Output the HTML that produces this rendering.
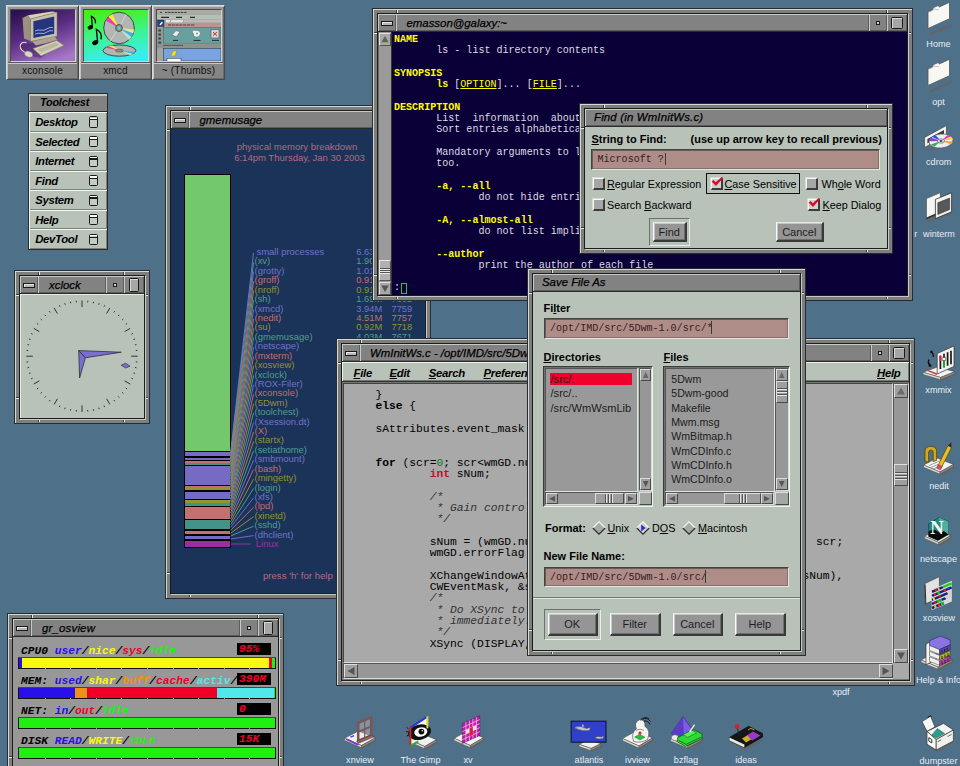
<!DOCTYPE html><html><head><meta charset="utf-8"><title>IRIX desktop</title><style>
*{box-sizing:border-box;margin:0;padding:0}
html,body{width:960px;height:766px;overflow:hidden;background:#4f7089}
body{position:relative;font-family:"Liberation Sans",sans-serif;font-size:11px;color:#000}
.a{position:absolute}
.win{position:absolute;background:#7e7e7c;border:1px solid #262c32;box-shadow:inset 1px 1px 0 #d2d8d4}
.win .in{position:absolute;left:4px;top:4px;right:4px;bottom:4px;border:1px solid #1c1c1c;background:#7a7a7a;box-shadow:1px 1px 0 #c4cac6}
.nt{position:absolute;background:#e8e8e8}
.nd{position:absolute;background:#3a3a3a}
.tb{position:absolute;left:0;top:0;right:0;height:18px;background:#838282;border-bottom:1px solid #2a2a2a}
.tb .ti{position:absolute;top:0;bottom:0;background:#838282;box-shadow:inset 1px 1px 0 #c4ccc4,inset -1px -1px 0 #5c5c5c;font:italic normal 11.4px "Liberation Sans",sans-serif;line-height:18px;white-space:nowrap;overflow:hidden;letter-spacing:0;-webkit-text-stroke:0.25px #000}
.tb .bt{position:absolute;top:0;bottom:0;background:#838282;box-shadow:inset 1px 1px 0 #c4ccc4,inset -1px -1px 0 #5c5c5c}
.cl{position:absolute;left:0;right:0;bottom:0;overflow:hidden}
.lbl{position:absolute;color:#e8eef4;font-size:9.1px;white-space:nowrap;text-align:center;transform:translateX(-50%)}
.mono{font-family:"Liberation Mono",monospace;white-space:pre}
.dlg{background:#b8c2b9}
.tf{position:absolute;background:#ae8c88;border:1px solid;border-color:#3e463e #dfe7df #dfe7df #3e463e;box-shadow:inset 1px 1px 0 #6a5a5a,inset -1px -1px 0 #8a6e6e;font-family:"Liberation Mono",monospace;white-space:pre;color:#3a2020}
.btn{position:absolute;background:#959595;border:solid;border-width:1px 2px 2px 1px;border-color:#e8e8e8 #3a3a3a #3a3a3a #fafafa;box-shadow:inset 1px 1px 0 #c6c6c6,inset -1px -1px 0 #6e6e6e;text-align:center;font-size:11px;color:#1e1e1e}
.ring{position:absolute;border:1px solid;border-color:#6a726a #e6eee6 #e6eee6 #6a726a}
.bl{position:absolute;font-weight:bold;font-size:11px;white-space:nowrap}
.nl{position:absolute;font-size:10.8px;white-space:nowrap}
.u{text-decoration:underline}
.cb{position:absolute;width:12px;height:12px;background:#a6a6a6;border:solid;border-width:1px 2px 2px 1px;border-color:#f8f8f8 #3c3c3c #3c3c3c #f8f8f8;box-shadow:-1px -1px 0 #d4dcd4}
.list{position:absolute;background:#a3a3a3;border:1px solid;border-color:#444 #eee #eee #444;box-shadow:inset 1px 1px 0 #6c6c6c}
.sb{position:absolute;background:#979797;border:1px solid;border-color:#555 #dcdcdc #dcdcdc #555}
.sbb{position:absolute;background:#9e9e9e;border:1px solid;border-color:#dedede #4a4a4a #4a4a4a #dedede}
</style></head><body>
<svg class="a" style="left:0;top:0" width="960" height="766" viewBox="0 0 960 766"><path d="M929.5 33.3 L951.5 23.8 L951.5 26.3 L929.5 35.8 Z" fill="#62666a"/><path d="M928 11.8 L932.2 9.899999999999999 L933.6 7.5 L938 5.6 L939.4 6.8999999999999995 L949.5 2.3 L949.5 18.7 L928 28.5 Z" fill="#f7f7f4" stroke="#555" stroke-width="0.8" stroke-linejoin="round"/><path d="M928.4 12.3 L932.6 10.5 L934.2 9.1 L938.6 9.7" fill="none" stroke="#9a9a9a" stroke-width="0.6"/><path d="M929.5 90.3 L951.5 80.8 L951.5 83.3 L929.5 92.8 Z" fill="#62666a"/><path d="M928 68.8 L932.2 66.89999999999999 L933.6 64.5 L938 62.599999999999994 L939.4 63.9 L949.5 59.3 L949.5 75.69999999999999 L928 85.5 Z" fill="#f7f7f4" stroke="#555" stroke-width="0.8" stroke-linejoin="round"/><path d="M928.4 69.3 L932.6 67.5 L934.2 66.1 L938.6 66.7" fill="none" stroke="#9a9a9a" stroke-width="0.6"/><path d="M926 149.5 L936 146 L936 148 L927 151 Z" fill="#62666a"/><path d="M924.6 137.4 L946.4 125.6 L946.4 135.5 L924.6 147.4 Z" fill="#f4f4f2" stroke="#444" stroke-width="0.7"/><path d="M927.4 139 L944 130 L944 134 L927.4 143.6 Z" fill="#3a3a3a"/><ellipse cx="941" cy="141" rx="12" ry="7" fill="#eceff2" stroke="#555" stroke-width="0.7" transform="rotate(-6 941 141)"/><path d="M941 141 L929.6 141.2 L930.6 137.6 Z" fill="#8a40d8"/><path d="M941 141 L930.8 144.4 L934.5 146.6 Z" fill="#30b050"/><path d="M941 141 L932 137 L935.5 135.3 Z" fill="#3050e0"/><path d="M941 141 L951.6 136.8 L952.9 139.6 Z" fill="#e8e030"/><path d="M941 141 L947.5 135 L950.8 136.5 Z" fill="#e040c0"/><path d="M941 141 L952.8 141.5 L951.5 144.2 Z" fill="#f0a030"/><ellipse cx="941" cy="141" rx="3.6" ry="2.2" fill="#d8d8dc" stroke="#555" stroke-width="0.6"/><ellipse cx="941" cy="141" rx="1.4" ry="0.9" fill="#444"/><path d="M928 220.5 L941 215.5 L952 212.5 L952 214.5 L941 218 L929 222.5 Z" fill="#62666a"/><path d="M926.4 198.6 L940.4 192.6 L940.4 213.4 L926.4 219.4 Z" fill="#f6f6f3" stroke="#4a4a4a" stroke-width="0.7"/><path d="M926.4 217.6 L940.4 211.6 L940.4 213.4 L926.4 219.4 Z" fill="#333"/><path d="M935.4 199.4 L951.6 192.8 L951.6 211.8 L935.4 218.6 Z" fill="#f2f2ee" stroke="#333" stroke-width="0.8"/><path d="M937.8 202.8 L949.6 198 L949.6 209.6 L937.8 214.6 Z" fill="#585858" stroke="#222" stroke-width="0.5"/><path d="M924.5 375.45 L942.1 380.9 L956.5 374.85 L955 372.25 Z" fill="#62666a"/><path d="M923 372.25 L937.4 367 L955 371.65 L940.6 377.5 Z" fill="#f2f2f0" stroke="#4a4a4a" stroke-width="0.6"/><path d="M923 372.25 L940.6 377.5 L940.6 379.7 L923 374.45 Z" fill="#dcdcd8" stroke="#4a4a4a" stroke-width="0.5"/><path d="M955 371.65 L940.6 377.5 L940.6 379.7 L955 373.84999999999997 Z" fill="#8c8c88" stroke="#4a4a4a" stroke-width="0.5"/><path d="M937.2 353.6 L954 346 L954 366.4 L937.2 374 Z" fill="#f2f2ee" stroke="#333" stroke-width="0.7"/><path d="M940.4 355.5 V369 M944 353.8 V367.4 M947.6 352.2 V365.8 M951 350.7 V364.2" stroke="#1a1a1a" stroke-width="1.7"/><path d="M940.4 356 V361" stroke="#e01828" stroke-width="1.7"/><path d="M944 359 V367" stroke="#18b830" stroke-width="1.7"/><path d="M942.3 357.5 h3.4 v3 h-3.4 z" fill="#fff" stroke="#222" stroke-width="0.5"/><path d="M930.5 352 q3.5 1 2.8 5 M929 359.5 q-1.6 3 0.6 5.2" stroke="#111" stroke-width="1.3" fill="none"/><circle cx="930" cy="365.5" r="1.4" fill="#111"/><circle cx="931.5" cy="351.8" r="1.2" fill="#111"/><path d="M927 369.4 L937.6 373.6 L936.4 375 L926 370.6 Z" fill="#c04848"/><path d="M925.0 468.2 L941.5 475.4 L955.0 467.6 L953.5 465.0 Z" fill="#62666a"/><path d="M923.5 465.0 L937.0 458 L953.5 464.4 L940.0 472 Z" fill="#f2f2f0" stroke="#4a4a4a" stroke-width="0.6"/><path d="M923.5 465.0 L940.0 472 L940.0 474.2 L923.5 467.2 Z" fill="#dcdcd8" stroke="#4a4a4a" stroke-width="0.5"/><path d="M953.5 464.4 L940.0 472 L940.0 474.2 L953.5 466.59999999999997 Z" fill="#8c8c88" stroke="#4a4a4a" stroke-width="0.5"/><path d="M925 461 V451.4 Q925 446.4 930.6 446.4 Q936.6 446.4 936.6 451.6 V460.4 L933.2 461.6 V452.6 Q933.2 450 930.8 450 Q928.6 450 928.6 452.6 V462.4 Z" fill="#d4a81c" stroke="#4a3a10" stroke-width="0.7"/><path d="M929 465.5 L941 460.5 M930.6 467.5 L938 464.4 M933 469 L943 464.8" stroke="#666" stroke-width="0.6"/><path d="M937.6 466.4 L948 445.6 L951.4 447.4 L941.2 468.2 Z" fill="#e8c020" stroke="#4a3a10" stroke-width="0.6"/><path d="M948 445.6 L951.2 442.2 L951.4 447.4 Z" fill="#2a2a2a"/><path d="M936.6 468.2 L938.4 464.6 L942.2 466.4 L940.4 470 Z" fill="#e04868" stroke="#802030" stroke-width="0.4"/><path d="M926.0 539.45 L940.3 545.9 L952.0 538.85 L950.5 536.25 Z" fill="#62666a"/><path d="M924.5 536.25 L936.2 530 L950.5 535.65 L938.8 542.5 Z" fill="#f2f2f0" stroke="#4a4a4a" stroke-width="0.6"/><path d="M924.5 536.25 L938.8 542.5 L938.8 544.7 L924.5 538.45 Z" fill="#dcdcd8" stroke="#4a4a4a" stroke-width="0.5"/><path d="M950.5 535.65 L938.8 542.5 L938.8 544.7 L950.5 537.85 Z" fill="#8c8c88" stroke="#4a4a4a" stroke-width="0.5"/><path d="M928.6 524 L938.6 517.6 L948.4 521.4 L948.4 534.6 L938 540.4 L928.6 536.4 Z" fill="#1f8a80" stroke="#133" stroke-width="0.6"/><path d="M938.6 517.6 L948.4 521.4 L948.4 534.6 L941 538.8 L941 524 Z" fill="#5ab8a8" opacity="0.8"/><path d="M928.6 532 Q932 527.6 936 530.6 Q940 533.6 944 531 L948.4 534.6 L938 540.4 L928.6 536.4 Z" fill="#0a0a0a"/><text x="930.2" y="534.4" font-family="Liberation Serif,serif" font-weight="bold" font-size="18.5" fill="#fff">N</text><path d="M927 606.5 L933 609.5 L933 611.5 L927 608.5 Z" fill="#62666a"/><path d="M924.4 583.8 L939.4 576.6 L939.4 597.4 L925.4 604 Z" fill="#e2e2e0" stroke="#444" stroke-width="0.7"/><path d="M924.4 583.8 L925.6 584.6 L926.4 604.4 L925.4 604 Z" fill="#333"/><path d="M931.6 589.4 L951.8 580.8 L951.8 601.6 L931.6 610.2 Z" fill="#dcdcd6"/><path d="M932.0 591.8 L942.8 587.2" stroke="#1c1c88" stroke-width="2.5"/><path d="M934.9 590.5 L936.9 589.7" stroke="#e02020" stroke-width="2.5"/><path d="M942.8 587.2 L951.6 583.4" stroke="#20d020" stroke-width="2.5"/><path d="M937.9 589.3 L939.4 588.6" stroke="#e8d020" stroke-width="2.5"/><path d="M932.0 595.8 L951.6 587.4" stroke="#1c1c88" stroke-width="2.5"/><path d="M934.0 595.0 L935.9 594.2" stroke="#e02020" stroke-width="2.5"/><path d="M937.5 593.5 L939.8 592.5" stroke="#20c020" stroke-width="2.5"/><path d="M943.8 590.8 L945.7 590.0" stroke="#e02020" stroke-width="2.5"/><path d="M947.7 589.1 L949.6 588.3" stroke="#3030e0" stroke-width="2.5"/><path d="M932.0 599.9 L947.7 593.2" stroke="#1c1c88" stroke-width="2.5"/><path d="M933.0 599.5 L934.9 598.6" stroke="#e8d020" stroke-width="2.5"/><path d="M938.9 597.0 L940.8 596.1" stroke="#e02020" stroke-width="2.5"/><path d="M947.7 593.2 L951.6 591.5" stroke="#d0d0c8" stroke-width="2.5"/><path d="M932.0 603.9 L945.7 598.1" stroke="#1c1c88" stroke-width="2.5"/><path d="M934.0 603.1 L935.9 602.3" stroke="#e02020" stroke-width="2.5"/><path d="M936.9 601.8 L941.8 599.7" stroke="#20c020" stroke-width="2.5"/><path d="M945.7 598.1 L951.6 595.5" stroke="#d0d0c8" stroke-width="2.5"/><path d="M932.0 608.0 L943.8 603.0" stroke="#1c1c88" stroke-width="2.5"/><path d="M934.4 607.0 L936.3 606.2" stroke="#e8d020" stroke-width="2.5"/><path d="M937.9 605.5 L940.2 604.5" stroke="#e02020" stroke-width="2.5"/><path d="M940.8 604.2 L943.8 603.0" stroke="#20c020" stroke-width="2.5"/><path d="M922.5 663.2 L939.55 670.4 L953.5 662.6 L952 660.0 Z" fill="#62666a"/><path d="M921 660.0 L934.95 653 L952 659.4 L938.05 667 Z" fill="#f2f2f0" stroke="#4a4a4a" stroke-width="0.6"/><path d="M921 660.0 L938.05 667 L938.05 669.2 L921 662.2 Z" fill="#dcdcd8" stroke="#4a4a4a" stroke-width="0.5"/><path d="M952 659.4 L938.05 667 L938.05 669.2 L952 661.6 Z" fill="#8c8c88" stroke="#4a4a4a" stroke-width="0.5"/><path d="M926 644 L936 639 L936 660 L926 664.6 Z" fill="#f4f4f0" stroke="#333" stroke-width="0.7"/><path d="M929.5 640.8 L940 636 L950.2 640 L950.2 644.8 L939.6 649.6 L929.5 645.6 Z" fill="#8a74e4" stroke="#2a2060" stroke-width="0.6"/><path d="M929.5 645.6 L939.6 649.6 L939.6 654.4 L929.5 650.4 Z" fill="#f0f0ec" stroke="#333" stroke-width="0.5"/><path d="M939.6 649.6 L950.2 644.8 L950.2 649.6 L939.6 654.4 Z" fill="#5a46b8" stroke="#222" stroke-width="0.5"/><path d="M929.5 651.4 L939.6 655.4 L939.6 659.8 L929.5 655.8 Z" fill="#f0f0ec" stroke="#333" stroke-width="0.5"/><path d="M939.6 655.4 L950.2 650.6 L950.2 655 L939.6 659.8 Z" fill="#b8b820" stroke="#222" stroke-width="0.5"/><path d="M929.5 656.8 L939.6 660.8 L939.6 665.4 L929.5 661.4 Z" fill="#f0f0ec" stroke="#333" stroke-width="0.5"/><path d="M939.6 660.8 L950.2 656 L950.2 660.6 L939.6 665.4 Z" fill="#c838b0" stroke="#222" stroke-width="0.5"/><path d="M942 650 v3 M944.6 648.8 v3 M947.2 647.6 v3 M942 656 v3 M945 654.6 v3 M948 653.2 v3 M942 661.4 v3 M945 660 v3 M948 658.6 v3" stroke="#222" stroke-width="1"/><path d="M928 746 L937 752 L954 742.5 L954 740 L937 749.5 Z" fill="#62666a"/><path d="M922 721.6 L930.6 716.2 L935 727 L927 731.4 Z" fill="#f7f7f4" stroke="#333" stroke-width="0.7"/><path d="M927.6 717.4 L931 715.6 L931.6 716.6" stroke="#222" stroke-width="1" fill="none"/><path d="M927 731.4 L943.6 723.4 L953.4 730 L936.2 739.6 Z" fill="#f4f4f1" stroke="#333" stroke-width="0.7"/><path d="M931.4 735.4 L937.4 728.6 L944.6 733.6 L936.4 738 Z" fill="#2f9c8c" stroke="#1a5a50" stroke-width="0.5"/><path d="M927 731.4 L936.2 739.6 L936.2 750 L927 744.2 Z" fill="#fbfbf9" stroke="#333" stroke-width="0.7"/><path d="M936.2 739.6 L953.4 730 L953.4 741 L936.2 750 Z" fill="#f0f0ec" stroke="#333" stroke-width="0.7"/><path d="M928.8 737.6 L931.8 739.6 L931.8 743 L928.8 741 Z" fill="none" stroke="#222" stroke-width="0.9"/><path d="M937.6 741.8 L941.2 739.8 M947.6 736.6 L951.6 734.4" stroke="#444" stroke-width="0.8"/><path d="M346.0 741.45 L363.05 748.9 L377.0 740.85 L375.5 738.25 Z" fill="#62666a"/><path d="M344.5 738.25 L358.45 731 L375.5 737.65 L361.55 745.5 Z" fill="#f2f2f0" stroke="#4a4a4a" stroke-width="0.6"/><path d="M344.5 738.25 L361.55 745.5 L361.55 747.7 L344.5 740.45 Z" fill="#dcdcd8" stroke="#4a4a4a" stroke-width="0.5"/><path d="M375.5 737.65 L361.55 745.5 L361.55 747.7 L375.5 739.85 Z" fill="#8c8c88" stroke="#4a4a4a" stroke-width="0.5"/><path d="M347 738.6 L359 744.2 L357.6 745.6 L345.6 739.8 Z" fill="#7838c8"/><path d="M358.2 741 V722.8 L371.2 717.4 V735.4 Z" fill="#dcdcdc" fill-opacity="0.35" stroke="#7c5656" stroke-width="2.6" stroke-linejoin="miter"/><path d="M358.2 731.8 L371.2 726.4" stroke="#7c5656" stroke-width="2"/><path d="M364.7 720 V738.2" stroke="#7c5656" stroke-width="1.2"/><path d="M356.6 741.2 L371.8 735 L374 736.8 L358.8 743.2 Z" fill="#8e6666" stroke="#4a3030" stroke-width="0.5"/><path d="M350.5 737.2 l3.6 -1.5" stroke="#3040e0" stroke-width="1.3"/><path d="M412.0 743.45 L426.3 749.9 L438.0 742.85 L436.5 740.25 Z" fill="#62666a"/><path d="M410.5 740.25 L422.2 734 L436.5 739.65 L424.8 746.5 Z" fill="#f2f2f0" stroke="#4a4a4a" stroke-width="0.6"/><path d="M410.5 740.25 L424.8 746.5 L424.8 748.7 L410.5 742.45 Z" fill="#dcdcd8" stroke="#4a4a4a" stroke-width="0.5"/><path d="M436.5 739.65 L424.8 746.5 L424.8 748.7 L436.5 741.85 Z" fill="#8c8c88" stroke="#4a4a4a" stroke-width="0.5"/><path d="M411 728 L427.4 717 L427.4 736 L411 745 Z" fill="#f4f4f2"/><ellipse cx="419.6" cy="732.2" rx="11.6" ry="7.6" fill="#101010" transform="rotate(-12 419.6 732.2)"/><ellipse cx="420.8" cy="732" rx="6.6" ry="4.6" fill="#fafafa" transform="rotate(-12 420.8 732)"/><circle cx="421.4" cy="731.6" r="2.9" fill="#0a0a0a"/><circle cx="422.3" cy="730.7" r="0.8" fill="#fff"/><path d="M410.4 727.6 L427.4 716.6" stroke="#2838d8" stroke-width="2"/><path d="M427.4 716.2 V728.4" stroke="#e0d828" stroke-width="2"/><path d="M410.4 727 V746" stroke="#d02028" stroke-width="2"/><path d="M410.6 745.6 L418.4 741.4" stroke="#28b030" stroke-width="1.8"/><path d="M408.6 729 l-2 -1.6 M408.4 732 l-2.4 -0.4 M408.8 735 l-2.2 1" stroke="#111" stroke-width="0.9"/><path d="M455.5 741.45 L471.725 748.9 L485.0 740.85 L483.5 738.25 Z" fill="#62666a"/><path d="M454 738.25 L467.275 731 L483.5 737.65 L470.225 745.5 Z" fill="#f2f2f0" stroke="#4a4a4a" stroke-width="0.6"/><path d="M454 738.25 L470.225 745.5 L470.225 747.7 L454 740.45 Z" fill="#dcdcd8" stroke="#4a4a4a" stroke-width="0.5"/><path d="M483.5 737.65 L470.225 745.5 L470.225 747.7 L483.5 739.85 Z" fill="#8c8c88" stroke="#4a4a4a" stroke-width="0.5"/><path d="M462.4 723.6 L479.8 715.6 L479.8 735.4 L462.4 743.4 Z" fill="#c418b0" stroke="#402040" stroke-width="0.5"/><path d="M465.9 722 V741.8 M469.4 720.4 V740.2 M472.9 718.8 V738.6 M476.4 717.2 V737 M462.4 727.6 L479.8 719.6 M462.4 731.6 L479.8 723.6 M462.4 735.6 L479.8 727.6 M462.4 739.6 L479.8 731.6" stroke="#e8c0e0" stroke-width="0.8"/><path d="M469.4 728.4 L472.9 726.8 L472.9 734.8 L469.4 736.4 Z" fill="#e02030"/><path d="M465.9 730 L469.4 728.4 V732.4 L465.9 734 Z M472.9 726.8 L476.4 725.2 V729.2 L472.9 730.8 Z" fill="#e8e0e0"/><path d="M580.5 747.45 L592.6 751.9 L602.5 746.85 L601 744.25 Z" fill="#62666a"/><path d="M579 744.25 L588.9 740 L601 743.65 L591.1 748.5 Z" fill="#f2f2f0" stroke="#4a4a4a" stroke-width="0.6"/><path d="M579 744.25 L591.1 748.5 L591.1 750.7 L579 746.45 Z" fill="#dcdcd8" stroke="#4a4a4a" stroke-width="0.5"/><path d="M601 743.65 L591.1 748.5 L591.1 750.7 L601 745.85 Z" fill="#8c8c88" stroke="#4a4a4a" stroke-width="0.5"/><rect x="571.2" y="721.2" width="34.8" height="21" fill="#3040c8" stroke="#101830" stroke-width="1.1"/><path d="M574 727.4 Q580 725 586.6 728.6 L590.6 727.2 L589.4 730.6 Q581 731.6 574 727.4 Z" fill="#c4c8d0" stroke="#333" stroke-width="0.4"/><path d="M581.4 726.4 l1.6 -2.4 l1 2.6" fill="#c4c8d0"/><path d="M594.6 737.4 Q598 735.6 601.4 737 L603.8 735.4 L603.2 738.6 Q598.4 740 594.6 737.4 Z" fill="#c4c8d0" stroke="#333" stroke-width="0.4"/><path d="M624.0 741.7 L640.5 749.4 L654.0 741.1 L652.5 738.5 Z" fill="#62666a"/><path d="M622.5 738.5 L636.0 731 L652.5 737.9 L639.0 746 Z" fill="#f2f2f0" stroke="#4a4a4a" stroke-width="0.6"/><path d="M622.5 738.5 L639.0 746 L639.0 748.2 L622.5 740.7 Z" fill="#dcdcd8" stroke="#4a4a4a" stroke-width="0.5"/><path d="M652.5 737.9 L639.0 746 L639.0 748.2 L652.5 740.1 Z" fill="#8c8c88" stroke="#4a4a4a" stroke-width="0.5"/><path d="M633.6 741.4 Q630.6 732.6 636.4 729 Q633.6 722.4 639.4 719.8 Q645.6 719.4 645 726.4 Q651 730 647.6 739.4 Q641 743.6 633.6 741.4 Z" fill="#f4f4f1" stroke="#444" stroke-width="0.6"/><path d="M640.6 720 Q644 716 649 718.6 M642.6 719.4 Q647 716.6 650.4 721.4 M644 721 Q648.6 720.6 650 724.6" stroke="#1a1a1a" stroke-width="1" fill="none"/><path d="M634.6 737 L639.6 734.2 L645 737.2 L640 740 Z" fill="#28c040" stroke="#145020" stroke-width="0.4"/><circle cx="640" cy="733" r="1.6" fill="#e02030"/><path d="M636 730.4 q4 -2.6 8 0" stroke="#555" stroke-width="0.6" fill="none"/><path d="M672.0 741.95 L689.325 749.4 L703.5 741.35 L702 738.75 Z" fill="#62666a"/><path d="M670.5 738.75 L684.675 731.5 L702 738.15 L687.825 746 Z" fill="#f2f2f0" stroke="#4a4a4a" stroke-width="0.6"/><path d="M670.5 738.75 L687.825 746 L687.825 748.2 L670.5 740.95 Z" fill="#dcdcd8" stroke="#4a4a4a" stroke-width="0.5"/><path d="M702 738.15 L687.825 746 L687.825 748.2 L702 740.35 Z" fill="#8c8c88" stroke="#4a4a4a" stroke-width="0.5"/><path d="M683 716.6 L671.4 733.4 L684 739 L693.6 731.4 Z" fill="#7c5ce4" stroke="#2a2060" stroke-width="0.6"/><path d="M683 716.6 L684 739 L671.4 733.4 Z" fill="#5a3cc8"/><path d="M671.6 736.4 q2.4 -3 6.4 -0.6 l0.6 4.6 q-4 1 -7 -1.4 z" fill="#ececea" stroke="#555" stroke-width="0.4"/><path d="M677.6 737.6 L694 729.6 L702 734 L702 738.6 L685.6 746.4 L677.6 742 Z" fill="#30d838" stroke="#0c4a14" stroke-width="0.7"/><path d="M683 734.4 L692 730.2 L696.6 732.8 L687.6 737.4 Z" fill="#58f060" stroke="#0c4a14" stroke-width="0.5"/><path d="M679 740.6 L686 744.4 L701 737.2" stroke="#0c4a14" stroke-width="0.7" fill="none"/><path d="M689.6 732 L694.6 724.6" stroke="#e8e8e8" stroke-width="1.4"/><path d="M731 742 L745 750.5 L763 741 L763 738.6 L745 748 Z" fill="#62666a"/><path d="M729.4 737.4 L748.6 726.2 L762.6 733.4 L762.6 737 L744.4 747.6 L729.4 740.6 Z" fill="#161616" stroke="#000" stroke-width="0.5"/><path d="M729.4 737.4 L744.4 744.4 L744.4 747.6 L729.4 740.6 Z" fill="#e8e8e4"/><path d="M745 736.6 L753 731.6 L760.4 735.4 L752.4 740.6 Z" fill="#9a38c8"/><path d="M742 738.6 L747.4 735.4 L751 739.6 L746 742.6 Z" fill="#c8b028"/><path d="M748 730 l3 -1.6 l3.4 1.6" stroke="#c8b028" stroke-width="0.9" fill="none"/><circle cx="737" cy="726.4" r="2.5" fill="#d42030"/><path d="M737.4 728.6 L739.6 736" stroke="#222" stroke-width="0.9"/></svg><div class="lbl" style="left:938.5px;top:38px;line-height:12px">Home</div><div class="lbl" style="left:938.5px;top:95.5px;line-height:12px">opt</div><div class="lbl" style="left:938.7px;top:155.5px;line-height:12px">cdrom</div><div class="lbl" style="left:939px;top:228.3px;line-height:12px">winterm</div><div class="lbl" style="left:915.7px;top:228.3px;line-height:12px">r</div><div class="lbl" style="left:938.5px;top:384.3px;line-height:12px">xmmix</div><div class="lbl" style="left:939px;top:480px;line-height:12px">nedit</div><div class="lbl" style="left:938.5px;top:553px;line-height:12px">netscape</div><div class="lbl" style="left:939px;top:612px;line-height:12px">xosview</div><div class="lbl" style="left:938.5px;top:674px;line-height:12px">Help &amp; Info</div><div class="lbl" style="left:938.5px;top:754.6px;line-height:12px">dumpster</div><div class="lbl" style="left:360px;top:754px;line-height:12px">xnview</div><div class="lbl" style="left:420.5px;top:754px;line-height:12px">The Gimp</div><div class="lbl" style="left:468px;top:754px;line-height:12px">xv</div><div class="lbl" style="left:589px;top:754px;line-height:12px">atlantis</div><div class="lbl" style="left:637.5px;top:754px;line-height:12px">ivview</div><div class="lbl" style="left:686px;top:754px;line-height:12px">bzflag</div><div class="lbl" style="left:746px;top:754px;line-height:12px">ideas</div><div class="lbl" style="left:841px;top:686px;line-height:12px">xpdf</div>
<div class="a" style="left:6px;top:5px;width:73px;height:75px;background:#969696;border:1px solid;border-color:#dcdcdc #464646 #464646 #dcdcdc;box-shadow:inset 1px 1px 0 #c4c4c4,inset -1px -1px 0 #6a6a6a"></div><div class="a" style="left:10px;top:9px;width:66px;height:53px;overflow:hidden;border:1px solid;border-color:#4a4a4a #d0d0d0 #d0d0d0 #4a4a4a"><svg width="64" height="51" viewBox="0 0 64 51"><defs><linearGradient id="pg" x1="0.2" y1="0" x2="0.7" y2="1"><stop offset="0" stop-color="#2c1250"/><stop offset="0.45" stop-color="#5a2c84"/><stop offset="1" stop-color="#a478c4"/></linearGradient></defs>
<rect width="64" height="51" fill="url(#pg)"/>
<path d="M8 36 Q20 30 44 37 L30 48 Q14 46 8 36 Z" fill="#3a1a5c" opacity="0.45"/>
<path d="M11.5 8 L17 5.2 L19.4 9 L19.4 31 L13 28.6 Z" fill="#9a927c"/>
<path d="M17 5.2 L41 1.6 L46 2.2 L19.4 9 Z" fill="#d8d2bc"/>
<path d="M19.4 9 L46 2.2 L46 26.2 L19.4 31.4 Z" fill="#c6c0a8" stroke="#7a745e" stroke-width="0.5"/>
<path d="M22.4 11.2 L43.2 6.4 L43.2 23.8 L22.4 28 Z" fill="#24357e"/>
<path d="M24 21 q3 -1.6 6 -0.8 t6 -1.4 t6 -1.2 M24 24.2 q3 -1.6 6 -0.8 t6 -1.4 t6 -1.2" stroke="#a8b8f0" stroke-width="0.9" fill="none"/>
<path d="M21 31.4 L44 26.6 L46 30 L25 35.4 Z" fill="#aaa48c"/>
<path d="M22 38.4 L45.6 30.4 L53 35.4 L30 46 Z" fill="#d4ceb6" stroke="#7a745e" stroke-width="0.5"/>
<path d="M26 39.2 L45 32.6 L48.6 35 L30 42.4 Z" fill="#bcb69e"/>
<path d="M14 42.4 Q7.6 38.6 9.6 34.2 Q11.4 31.4 15.4 32.6" stroke="#e0dcc8" stroke-width="1.1" fill="none"/>
<ellipse cx="17.6" cy="44.2" rx="4.2" ry="2.8" fill="#dcd8c4" stroke="#7a745e" stroke-width="0.4" transform="rotate(20 17.6 44.2)"/>
</svg></div><div class="a" style="left:8px;top:64px;width:69px;height:14px;background:#858585;box-shadow:0 -1px 0 #c8c8c8,0 -2px 0 #5a5a5a;text-align:center;font-size:10px;line-height:14.5px;color:#111;letter-spacing:0.2px">xconsole</div>
<div class="a" style="left:79px;top:5px;width:73px;height:75px;background:#969696;border:1px solid;border-color:#dcdcdc #464646 #464646 #dcdcdc;box-shadow:inset 1px 1px 0 #c4c4c4,inset -1px -1px 0 #6a6a6a"></div><div class="a" style="left:83px;top:9px;width:66px;height:53px;overflow:hidden;border:1px solid;border-color:#4a4a4a #d0d0d0 #d0d0d0 #4a4a4a"><svg width="64" height="51" viewBox="0 0 64 51"><defs><linearGradient id="cg" x1="0.3" y1="0" x2="0.5" y2="1"><stop offset="0" stop-color="#44f014"/><stop offset="0.5" stop-color="#3cf490"/><stop offset="1" stop-color="#38ecf4"/></linearGradient></defs>
<rect width="64" height="51" fill="url(#cg)"/>
<ellipse cx="35" cy="18" rx="15.3" ry="15.8" fill="#b2b6b2" stroke="#3a3a3a" stroke-width="0.9"/>
<path d="M35 18 L21.6 10.6 L24.6 6.4 Z" fill="#f038b0"/><path d="M35 18 L24.4 6.6 L28.4 4 Z" fill="#f4ec38"/>
<path d="M35 18 L47.6 27 L49.4 23.2 Z" fill="#48a8f4"/><path d="M35 18 L45.2 30 L47.6 27 Z" fill="#b0e8c0"/><path d="M35 18 L49.4 23.2 L50 19.6 Z" fill="#e8e890"/>
<path d="M35 18 L42 4.4 M35 18 L26 31" stroke="#dcdcdc" stroke-width="0.8"/>
<ellipse cx="35" cy="18" rx="3.4" ry="3.6" fill="#8c8c8c" stroke="#3a3a3a" stroke-width="0.7"/><ellipse cx="35" cy="18" rx="1.5" ry="1.6" fill="#40e8b0"/>
<ellipse cx="35.4" cy="40.6" rx="16.4" ry="5.6" fill="#b2b6b2" stroke="#3a3a3a" stroke-width="0.9"/>
<path d="M35.4 40.6 L21 37.6 L24.4 36 Z" fill="#f038b0"/><path d="M35.4 40.6 L24.4 36 L28.4 35.4 Z" fill="#f4ec38"/><path d="M35.4 40.6 L49 44 L51 42 Z" fill="#48a8f4"/><path d="M35.4 40.6 L46 45.2 L49 44 Z" fill="#b0e8c0"/>
<ellipse cx="35.4" cy="40.6" rx="4" ry="1.5" fill="#8c8c8c" stroke="#3a3a3a" stroke-width="0.5"/>
<g fill="#0a0a0a" stroke="#0a0a0a"><ellipse cx="6.4" cy="17.4" rx="2.3" ry="1.6" transform="rotate(-25 6.4 17.4)"/><path d="M8.4 16.8 L7.4 6.4 Q12 8.4 11.4 13.4" fill="none" stroke-width="1.3"/>
<ellipse cx="11.2" cy="32.6" rx="2.6" ry="1.8" transform="rotate(-25 11.2 32.6)"/><path d="M13.6 32 L12.4 19.4 Q18.6 22.4 17 29.4" fill="none" stroke-width="1.4"/></g>
</svg></div><div class="a" style="left:81px;top:64px;width:69px;height:14px;background:#858585;box-shadow:0 -1px 0 #c8c8c8,0 -2px 0 #5a5a5a;text-align:center;font-size:10px;line-height:14.5px;color:#111;letter-spacing:0.2px">xmcd</div>
<div class="a" style="left:152px;top:5px;width:73px;height:75px;background:#969696;border:1px solid;border-color:#dcdcdc #464646 #464646 #dcdcdc;box-shadow:inset 1px 1px 0 #c4c4c4,inset -1px -1px 0 #6a6a6a"></div><div class="a" style="left:156px;top:9px;width:66px;height:53px;overflow:hidden;border:1px solid;border-color:#4a4a4a #d0d0d0 #d0d0d0 #4a4a4a"><svg width="64" height="51" viewBox="0 0 64 51"><rect width="64" height="51" fill="#a2a6a0"/>
<rect x="0" y="0" width="64" height="4.4" fill="#a8aca4"/><path d="M3 2.4 h2 M8 2.4 H30" stroke="#3a3a3a" stroke-width="1" stroke-dasharray="2.4 0.8"/>
<rect x="0" y="5" width="64" height="4.4" fill="#b6beb6"/><path d="M4 7.4 H12 M19 7.4 H25 M33 7.4 H38" stroke="#2a2a2a" stroke-width="1.1"/>
<rect x="0.6" y="10" width="6.4" height="6.6" fill="#2a3c8c" stroke="#222" stroke-width="0.4"/><path d="M2.4 14.6 l2.6 -3 l0.8 1.2 l-2.2 2.6 z" fill="#fff"/>
<rect x="9" y="10" width="4" height="2.4" fill="#e8e8e8"/><rect x="14" y="10" width="12" height="2.4" fill="#e0e0e0"/><rect x="27" y="10" width="37" height="2.4" fill="#b8bcb6"/>
<rect x="9" y="13" width="55" height="3.6" fill="#c88e8e"/><path d="M11 15 H38" stroke="#4a3030" stroke-width="0.9" stroke-dasharray="3 0.8"/>
<rect x="0" y="17.6" width="6" height="16" fill="#909890"/><path d="M2.6 19.4 v2.2 M2.6 23.4 v2.2 M2.6 27.4 v2.2" stroke="#2a3a58" stroke-width="2.4"/><rect x="1.2" y="31.6" width="3" height="2.4" fill="#2a3c8c"/>
<rect x="6.4" y="17.6" width="57.6" height="15.6" fill="#68a0a0" stroke="#3a5a5a" stroke-width="0.5"/>
<path d="M15 25 L19 20.6 L23 21.8 L19.4 26.8 Z" fill="#ececec" stroke="#555" stroke-width="0.5"/>
<path d="M35 22 Q36 19.4 39 20.4 Q43 20 43.4 23.4 Q43 27 39.6 27 Q36 26.6 36.6 24 Z" fill="#f4f4f4" stroke="#555" stroke-width="0.5"/><circle cx="40" cy="23.6" r="1" fill="#4aa"/>
<rect x="54" y="19.6" width="8" height="8.4" fill="#dcd4d4" stroke="#456" stroke-width="0.6"/><path d="M56 22 l4 3.6 m0 -3.6 l-4 3.6" stroke="#c82828" stroke-width="1"/>
<path d="M16 30.4 h5 M36.6 30.4 h7 M55 30.4 h7" stroke="#1a3038" stroke-width="1"/>
<rect x="0" y="33.6" width="64" height="4.6" fill="#8e928c"/><path d="M6 35.4 h20" stroke="#444" stroke-width="0.8"/>
<rect x="6.4" y="38.6" width="57.6" height="12.4" fill="#7aa4e0" stroke="#2a3a58" stroke-width="0.6"/>
<path d="M14 46.4 L15.6 41.4 L19.6 40.4 L18.4 45.6 Z" fill="#f0e428" stroke="#8a8010" stroke-width="0.4"/>
<rect x="10" y="48.4" width="14" height="3" fill="#fff" stroke="#000" stroke-width="0.4"/>
</svg></div><div class="a" style="left:154px;top:64px;width:69px;height:14px;background:#858585;box-shadow:0 -1px 0 #c8c8c8,0 -2px 0 #5a5a5a;text-align:center;font-size:10px;line-height:14.5px;color:#111;letter-spacing:0.2px">~ (Thumbs)</div>
<div class="a" style="left:28px;top:93px;width:80px;height:156.8px;background:#b8c2b9;border:1px solid #2a2a2a"></div><div class="a" style="left:29px;top:94px;width:78px;height:17px;background:#828282;box-shadow:inset 1px 2px 0 #c4c8c2,0 1px 0 #2a2a2a;font:italic bold 10.9px 'Liberation Sans',sans-serif;letter-spacing:-0.2px;line-height:17.4px;padding-left:10.9px">Toolchest</div><div class="a" style="left:29px;top:112.0px;width:78px;height:19.54px;background:#b8c2b9;box-shadow:inset 1px 1px 0 #f2f6f2,inset -1px -1px 0 #7a827a;font:italic bold 11.3px 'Liberation Sans',sans-serif;letter-spacing:-0.3px;line-height:21.1px;padding-left:6.2px">Desktop</div><div class="a" style="left:88.6px;top:116.4px;width:9px;height:11.4px;border:1.3px solid #1a1a1a;border-radius:1.6px;background:#c4ccc4"></div><div class="a" style="left:89.6px;top:117.6px;width:7px;height:1.6px;background:#fff"></div><div class="a" style="left:89.19999999999999px;top:119.2px;width:8px;height:1.3px;background:#1a1a1a"></div><div class="a" style="left:29px;top:131.5px;width:78px;height:19.54px;background:#b8c2b9;box-shadow:inset 1px 1px 0 #f2f6f2,inset -1px -1px 0 #7a827a;font:italic bold 11.3px 'Liberation Sans',sans-serif;letter-spacing:-0.3px;line-height:21.1px;padding-left:6.2px">Selected</div><div class="a" style="left:88.6px;top:135.9px;width:9px;height:11.4px;border:1.3px solid #1a1a1a;border-radius:1.6px;background:#c4ccc4"></div><div class="a" style="left:89.6px;top:137.1px;width:7px;height:1.6px;background:#fff"></div><div class="a" style="left:89.19999999999999px;top:138.7px;width:8px;height:1.3px;background:#1a1a1a"></div><div class="a" style="left:29px;top:151.1px;width:78px;height:19.54px;background:#b8c2b9;box-shadow:inset 1px 1px 0 #f2f6f2,inset -1px -1px 0 #7a827a;font:italic bold 11.3px 'Liberation Sans',sans-serif;letter-spacing:-0.3px;line-height:21.1px;padding-left:6.2px">Internet</div><div class="a" style="left:88.6px;top:155.5px;width:9px;height:11.4px;border:1.3px solid #1a1a1a;border-radius:1.6px;background:#c4ccc4"></div><div class="a" style="left:89.6px;top:156.7px;width:7px;height:1.6px;background:#fff"></div><div class="a" style="left:89.19999999999999px;top:158.3px;width:8px;height:1.3px;background:#1a1a1a"></div><div class="a" style="left:29px;top:170.6px;width:78px;height:19.54px;background:#b8c2b9;box-shadow:inset 1px 1px 0 #f2f6f2,inset -1px -1px 0 #7a827a;font:italic bold 11.3px 'Liberation Sans',sans-serif;letter-spacing:-0.3px;line-height:21.1px;padding-left:6.2px">Find</div><div class="a" style="left:88.6px;top:175.0px;width:9px;height:11.4px;border:1.3px solid #1a1a1a;border-radius:1.6px;background:#c4ccc4"></div><div class="a" style="left:89.6px;top:176.2px;width:7px;height:1.6px;background:#fff"></div><div class="a" style="left:89.19999999999999px;top:177.8px;width:8px;height:1.3px;background:#1a1a1a"></div><div class="a" style="left:29px;top:190.2px;width:78px;height:19.54px;background:#b8c2b9;box-shadow:inset 1px 1px 0 #f2f6f2,inset -1px -1px 0 #7a827a;font:italic bold 11.3px 'Liberation Sans',sans-serif;letter-spacing:-0.3px;line-height:21.1px;padding-left:6.2px">System</div><div class="a" style="left:88.6px;top:194.6px;width:9px;height:11.4px;border:1.3px solid #1a1a1a;border-radius:1.6px;background:#c4ccc4"></div><div class="a" style="left:89.6px;top:195.8px;width:7px;height:1.6px;background:#fff"></div><div class="a" style="left:89.19999999999999px;top:197.4px;width:8px;height:1.3px;background:#1a1a1a"></div><div class="a" style="left:29px;top:209.7px;width:78px;height:19.54px;background:#b8c2b9;box-shadow:inset 1px 1px 0 #f2f6f2,inset -1px -1px 0 #7a827a;font:italic bold 11.3px 'Liberation Sans',sans-serif;letter-spacing:-0.3px;line-height:21.1px;padding-left:6.2px">Help</div><div class="a" style="left:88.6px;top:214.1px;width:9px;height:11.4px;border:1.3px solid #1a1a1a;border-radius:1.6px;background:#c4ccc4"></div><div class="a" style="left:89.6px;top:215.3px;width:7px;height:1.6px;background:#fff"></div><div class="a" style="left:89.19999999999999px;top:216.9px;width:8px;height:1.3px;background:#1a1a1a"></div><div class="a" style="left:29px;top:229.3px;width:78px;height:19.54px;background:#b8c2b9;box-shadow:inset 1px 1px 0 #f2f6f2,inset -1px -1px 0 #7a827a;font:italic bold 11.3px 'Liberation Sans',sans-serif;letter-spacing:-0.3px;line-height:21.1px;padding-left:6.2px">DevTool</div><div class="a" style="left:88.6px;top:233.7px;width:9px;height:11.4px;border:1.3px solid #1a1a1a;border-radius:1.6px;background:#c4ccc4"></div><div class="a" style="left:89.6px;top:234.9px;width:7px;height:1.6px;background:#fff"></div><div class="a" style="left:89.19999999999999px;top:236.5px;width:8px;height:1.3px;background:#1a1a1a"></div>
<div class="win" style="left:14px;top:270px;width:136px;height:154px"><div class="nt" style="left:24px;top:1px;width:1px;height:4px"></div><div class="nd" style="left:23px;top:1px;width:1px;height:4px"></div><div class="nt" style="left:109px;top:1px;width:1px;height:4px"></div><div class="nd" style="left:108px;top:1px;width:1px;height:4px"></div><div class="nt" style="left:24px;top:147px;width:1px;height:4px"></div><div class="nd" style="left:23px;top:147px;width:1px;height:4px"></div><div class="nt" style="left:109px;top:147px;width:1px;height:4px"></div><div class="nd" style="left:108px;top:147px;width:1px;height:4px"></div><div class="nt" style="left:1px;top:24px;width:4px;height:1px"></div><div class="nd" style="left:1px;top:23px;width:4px;height:1px"></div><div class="nt" style="left:1px;top:127px;width:4px;height:1px"></div><div class="nd" style="left:1px;top:126px;width:4px;height:1px"></div><div class="nt" style="left:129px;top:24px;width:4px;height:1px"></div><div class="nd" style="left:129px;top:23px;width:4px;height:1px"></div><div class="nt" style="left:129px;top:127px;width:4px;height:1px"></div><div class="nd" style="left:129px;top:126px;width:4px;height:1px"></div><div class="in"><div class="tb"><div class="bt" style="left:0;width:18px"><div class="a" style="left:3px;top:7px;width:12.4px;height:5.2px;border:1px solid #1a1a1a;border-bottom-width:1.4px;background:#b8b8b8;box-shadow:inset 1px 1px 0 #e8e8e8"></div></div><div class="bt" style="right:0;width:20px"><div class="a" style="left:5px;top:2px;width:10px;height:14px;border:1px solid #1a1a1a;border-bottom-width:1.4px;border-right-width:1.4px;border-radius:1.5px;background:#a6a6a6;box-shadow:inset 1px 1px 0 #d8d8d8"></div></div><div class="bt" style="right:20px;width:18px"><div class="a" style="left:7px;top:7px;width:4.4px;height:4.4px;border:1px solid #1a1a1a;background:#d0d0d0"></div></div><div class="ti" style="left:18px;right:38px;padding-left:11px">xclock</div></div><div class="cl " style="top:18px"><div class="a" style="left:0;top:0;width:100%;height:100%;background:#b8c2b9;box-shadow:inset 1px 1px 0 #e4ece4"></div><svg class="a" style="left:0;top:0" width="125" height="124" viewBox="0 0 125 124"><line x1="62.00" y1="13.00" x2="62.00" y2="6.50" stroke="#2c362c" stroke-width="1"/><line x1="67.65" y1="8.40" x2="67.82" y2="6.81" stroke="#2c362c" stroke-width="1"/><line x1="73.25" y1="9.28" x2="73.58" y2="7.72" stroke="#2c362c" stroke-width="1"/><line x1="78.72" y1="10.75" x2="79.21" y2="9.23" stroke="#2c362c" stroke-width="1"/><line x1="84.00" y1="12.78" x2="84.66" y2="11.32" stroke="#2c362c" stroke-width="1"/><line x1="86.60" y1="19.59" x2="89.85" y2="13.96" stroke="#2c362c" stroke-width="1"/><line x1="93.80" y1="18.43" x2="94.74" y2="17.14" stroke="#2c362c" stroke-width="1"/><line x1="98.20" y1="22.00" x2="99.27" y2="20.81" stroke="#2c362c" stroke-width="1"/><line x1="102.20" y1="26.00" x2="103.39" y2="24.93" stroke="#2c362c" stroke-width="1"/><line x1="105.77" y1="30.40" x2="107.06" y2="29.46" stroke="#2c362c" stroke-width="1"/><line x1="104.61" y1="37.60" x2="110.24" y2="34.35" stroke="#2c362c" stroke-width="1"/><line x1="111.42" y1="40.20" x2="112.88" y2="39.54" stroke="#2c362c" stroke-width="1"/><line x1="113.45" y1="45.48" x2="114.97" y2="44.99" stroke="#2c362c" stroke-width="1"/><line x1="114.92" y1="50.95" x2="116.48" y2="50.62" stroke="#2c362c" stroke-width="1"/><line x1="115.80" y1="56.55" x2="117.39" y2="56.38" stroke="#2c362c" stroke-width="1"/><line x1="111.20" y1="62.20" x2="117.70" y2="62.20" stroke="#2c362c" stroke-width="1"/><line x1="115.80" y1="67.85" x2="117.39" y2="68.02" stroke="#2c362c" stroke-width="1"/><line x1="114.92" y1="73.45" x2="116.48" y2="73.78" stroke="#2c362c" stroke-width="1"/><line x1="113.45" y1="78.92" x2="114.97" y2="79.41" stroke="#2c362c" stroke-width="1"/><line x1="111.42" y1="84.20" x2="112.88" y2="84.86" stroke="#2c362c" stroke-width="1"/><line x1="104.61" y1="86.80" x2="110.24" y2="90.05" stroke="#2c362c" stroke-width="1"/><line x1="105.77" y1="94.00" x2="107.06" y2="94.94" stroke="#2c362c" stroke-width="1"/><line x1="102.20" y1="98.40" x2="103.39" y2="99.47" stroke="#2c362c" stroke-width="1"/><line x1="98.20" y1="102.40" x2="99.27" y2="103.59" stroke="#2c362c" stroke-width="1"/><line x1="93.80" y1="105.97" x2="94.74" y2="107.26" stroke="#2c362c" stroke-width="1"/><line x1="86.60" y1="104.81" x2="89.85" y2="110.44" stroke="#2c362c" stroke-width="1"/><line x1="84.00" y1="111.62" x2="84.66" y2="113.08" stroke="#2c362c" stroke-width="1"/><line x1="78.72" y1="113.65" x2="79.21" y2="115.17" stroke="#2c362c" stroke-width="1"/><line x1="73.25" y1="115.12" x2="73.58" y2="116.68" stroke="#2c362c" stroke-width="1"/><line x1="67.65" y1="116.00" x2="67.82" y2="117.59" stroke="#2c362c" stroke-width="1"/><line x1="62.00" y1="111.40" x2="62.00" y2="117.90" stroke="#2c362c" stroke-width="1"/><line x1="56.35" y1="116.00" x2="56.18" y2="117.59" stroke="#2c362c" stroke-width="1"/><line x1="50.75" y1="115.12" x2="50.42" y2="116.68" stroke="#2c362c" stroke-width="1"/><line x1="45.28" y1="113.65" x2="44.79" y2="115.17" stroke="#2c362c" stroke-width="1"/><line x1="40.00" y1="111.62" x2="39.34" y2="113.08" stroke="#2c362c" stroke-width="1"/><line x1="37.40" y1="104.81" x2="34.15" y2="110.44" stroke="#2c362c" stroke-width="1"/><line x1="30.20" y1="105.97" x2="29.26" y2="107.26" stroke="#2c362c" stroke-width="1"/><line x1="25.80" y1="102.40" x2="24.73" y2="103.59" stroke="#2c362c" stroke-width="1"/><line x1="21.80" y1="98.40" x2="20.61" y2="99.47" stroke="#2c362c" stroke-width="1"/><line x1="18.23" y1="94.00" x2="16.94" y2="94.94" stroke="#2c362c" stroke-width="1"/><line x1="19.39" y1="86.80" x2="13.76" y2="90.05" stroke="#2c362c" stroke-width="1"/><line x1="12.58" y1="84.20" x2="11.12" y2="84.86" stroke="#2c362c" stroke-width="1"/><line x1="10.55" y1="78.92" x2="9.03" y2="79.41" stroke="#2c362c" stroke-width="1"/><line x1="9.08" y1="73.45" x2="7.52" y2="73.78" stroke="#2c362c" stroke-width="1"/><line x1="8.20" y1="67.85" x2="6.61" y2="68.02" stroke="#2c362c" stroke-width="1"/><line x1="12.80" y1="62.20" x2="6.30" y2="62.20" stroke="#2c362c" stroke-width="1"/><line x1="8.20" y1="56.55" x2="6.61" y2="56.38" stroke="#2c362c" stroke-width="1"/><line x1="9.08" y1="50.95" x2="7.52" y2="50.62" stroke="#2c362c" stroke-width="1"/><line x1="10.55" y1="45.48" x2="9.03" y2="44.99" stroke="#2c362c" stroke-width="1"/><line x1="12.58" y1="40.20" x2="11.12" y2="39.54" stroke="#2c362c" stroke-width="1"/><line x1="19.39" y1="37.60" x2="13.76" y2="34.35" stroke="#2c362c" stroke-width="1"/><line x1="18.23" y1="30.40" x2="16.94" y2="29.46" stroke="#2c362c" stroke-width="1"/><line x1="21.80" y1="26.00" x2="20.61" y2="24.93" stroke="#2c362c" stroke-width="1"/><line x1="25.80" y1="22.00" x2="24.73" y2="20.81" stroke="#2c362c" stroke-width="1"/><line x1="30.20" y1="18.43" x2="29.26" y2="17.14" stroke="#2c362c" stroke-width="1"/><line x1="37.40" y1="19.59" x2="34.15" y2="13.96" stroke="#2c362c" stroke-width="1"/><line x1="40.00" y1="12.78" x2="39.34" y2="11.32" stroke="#2c362c" stroke-width="1"/><line x1="45.28" y1="10.75" x2="44.79" y2="9.23" stroke="#2c362c" stroke-width="1"/><line x1="50.75" y1="9.28" x2="50.42" y2="7.72" stroke="#2c362c" stroke-width="1"/><line x1="56.35" y1="8.40" x2="56.18" y2="6.81" stroke="#2c362c" stroke-width="1"/><path d="M58.7 56.6 L101.3 58.2 L65.4 63.8 Z" fill="#7a6fd0" stroke="#222" stroke-width="0.7"/><path d="M58.7 56.6 L65.4 63.8 L59.6 84 Z" fill="#7a6fd0" stroke="#222" stroke-width="0.7"/><path d="M101.2 71.2 L105.6 69.2 L110 72.2 L105.6 74 Z" fill="#7a6fd0" stroke="#222" stroke-width="0.6"/></svg></div></div></div>
<div class="win" style="left:165px;top:105px;width:266px;height:494px"><div class="nt" style="left:24px;top:1px;width:1px;height:4px"></div><div class="nd" style="left:23px;top:1px;width:1px;height:4px"></div><div class="nt" style="left:239px;top:1px;width:1px;height:4px"></div><div class="nd" style="left:238px;top:1px;width:1px;height:4px"></div><div class="nt" style="left:24px;top:487px;width:1px;height:4px"></div><div class="nd" style="left:23px;top:487px;width:1px;height:4px"></div><div class="nt" style="left:239px;top:487px;width:1px;height:4px"></div><div class="nd" style="left:238px;top:487px;width:1px;height:4px"></div><div class="nt" style="left:1px;top:24px;width:4px;height:1px"></div><div class="nd" style="left:1px;top:23px;width:4px;height:1px"></div><div class="nt" style="left:1px;top:467px;width:4px;height:1px"></div><div class="nd" style="left:1px;top:466px;width:4px;height:1px"></div><div class="nt" style="left:259px;top:24px;width:4px;height:1px"></div><div class="nd" style="left:259px;top:23px;width:4px;height:1px"></div><div class="nt" style="left:259px;top:467px;width:4px;height:1px"></div><div class="nd" style="left:259px;top:466px;width:4px;height:1px"></div><div class="in"><div class="tb"><div class="bt" style="left:0;width:18px"><div class="a" style="left:3px;top:7px;width:12.4px;height:5.2px;border:1px solid #1a1a1a;border-bottom-width:1.4px;background:#b8b8b8;box-shadow:inset 1px 1px 0 #e8e8e8"></div></div><div class="ti" style="left:18px;right:0px;padding-left:10.5px">gmemusage</div></div><div class="cl " style="top:18px"><div class="a" style="left:0;top:0;width:100%;height:100%;background:#1b3259"></div><div class="a" style="left:126px;top:11.699999999999989px;transform:translateX(-50%);font-size:9.5px;line-height:12px;color:#b56b7c;white-space:nowrap">physical memory breakdown</div><div class="a" style="left:128.5px;top:22.80000000000001px;transform:translateX(-50%);font-size:9.5px;line-height:12px;color:#b56b7c;white-space:nowrap">6:14pm Thursday, Jan 30 2003</div><div class="a" style="left:92px;top:441px;font-size:9.6px;line-height:12px;color:#b56b7c;white-space:nowrap">press 'h' for help</div><div class="a" style="left:12.5px;top:45px;width:47.5px;height:374px;background:#000"></div><div class="a" style="left:13.5px;top:45.5px;width:45.5px;height:276.7px;background:#73c86c"></div><div class="a" style="left:13.5px;top:323px;width:45.5px;height:3.8px;background:#756bc3"></div><div class="a" style="left:13.5px;top:329px;width:45.5px;height:2.2px;background:#756bc3"></div><div class="a" style="left:13.5px;top:331.5px;width:45.5px;height:2.3px;background:#c47070"></div><div class="a" style="left:13.5px;top:334.4px;width:45.5px;height:1.6px;background:#459288"></div><div class="a" style="left:13.5px;top:337px;width:45.5px;height:18.7px;background:#756bc3"></div><div class="a" style="left:13.5px;top:357px;width:45.5px;height:1.7px;background:#c47070"></div><div class="a" style="left:13.5px;top:359px;width:45.5px;height:2.3px;background:#92962c"></div><div class="a" style="left:13.5px;top:363px;width:45.5px;height:7.3px;background:#756bc3"></div><div class="a" style="left:13.5px;top:371px;width:45.5px;height:2.5px;background:#92962c"></div><div class="a" style="left:13.5px;top:374.3px;width:45.5px;height:2.7px;background:#459288"></div><div class="a" style="left:13.5px;top:378px;width:45.5px;height:11.8px;background:#c47070"></div><div class="a" style="left:13.5px;top:391px;width:45.5px;height:9.0px;background:#459288"></div><div class="a" style="left:13.5px;top:401.5px;width:45.5px;height:3.1px;background:#c47070"></div><div class="a" style="left:13.5px;top:406.79999999999995px;width:45.5px;height:2.9px;background:#756bc3"></div><div class="a" style="left:13.5px;top:411.70000000000005px;width:45.5px;height:6.5px;background:#9a30a0"></div><div class="a" style="left:85.5px;top:117.0px;font-size:9.45px;line-height:12px;color:#7272c9;white-space:nowrap">small processes</div><div class="a" style="left:185.3px;top:117.0px;font-size:9.3px;line-height:12px;color:#7272c9;white-space:nowrap">6.63M</div><div class="a" style="left:220.5px;top:117.0px;font-size:9.3px;line-height:12px;color:#7272c9;white-space:nowrap"></div><div class="a" style="left:83.5px;top:126.4px;font-size:9.45px;line-height:12px;color:#4f9f8f;white-space:nowrap">(xv)</div><div class="a" style="left:185.3px;top:126.4px;font-size:9.3px;line-height:12px;color:#4f9f8f;white-space:nowrap">1.90M</div><div class="a" style="left:220.5px;top:126.4px;font-size:9.3px;line-height:12px;color:#4f9f8f;white-space:nowrap">7812</div><div class="a" style="left:83.5px;top:135.8px;font-size:9.45px;line-height:12px;color:#7272c9;white-space:nowrap">(grotty)</div><div class="a" style="left:185.3px;top:135.8px;font-size:9.3px;line-height:12px;color:#7272c9;white-space:nowrap">1.01M</div><div class="a" style="left:220.5px;top:135.8px;font-size:9.3px;line-height:12px;color:#7272c9;white-space:nowrap">7811</div><div class="a" style="left:83.5px;top:145.3px;font-size:9.45px;line-height:12px;color:#c07070;white-space:nowrap">(groff)</div><div class="a" style="left:185.3px;top:145.3px;font-size:9.3px;line-height:12px;color:#c07070;white-space:nowrap">0.91M</div><div class="a" style="left:220.5px;top:145.3px;font-size:9.3px;line-height:12px;color:#c07070;white-space:nowrap">7810</div><div class="a" style="left:83.5px;top:154.7px;font-size:9.45px;line-height:12px;color:#92922f;white-space:nowrap">(nroff)</div><div class="a" style="left:185.3px;top:154.7px;font-size:9.3px;line-height:12px;color:#92922f;white-space:nowrap">0.91M</div><div class="a" style="left:220.5px;top:154.7px;font-size:9.3px;line-height:12px;color:#92922f;white-space:nowrap">7809</div><div class="a" style="left:83.5px;top:164.1px;font-size:9.45px;line-height:12px;color:#4f9f8f;white-space:nowrap">(sh)</div><div class="a" style="left:185.3px;top:164.1px;font-size:9.3px;line-height:12px;color:#4f9f8f;white-space:nowrap">1.69M</div><div class="a" style="left:220.5px;top:164.1px;font-size:9.3px;line-height:12px;color:#4f9f8f;white-space:nowrap">7802</div><div class="a" style="left:83.5px;top:173.5px;font-size:9.45px;line-height:12px;color:#7272c9;white-space:nowrap">(xmcd)</div><div class="a" style="left:185.3px;top:173.5px;font-size:9.3px;line-height:12px;color:#7272c9;white-space:nowrap">3.94M</div><div class="a" style="left:220.5px;top:173.5px;font-size:9.3px;line-height:12px;color:#7272c9;white-space:nowrap">7759</div><div class="a" style="left:83.5px;top:182.9px;font-size:9.45px;line-height:12px;color:#c07070;white-space:nowrap">(nedit)</div><div class="a" style="left:185.3px;top:182.9px;font-size:9.3px;line-height:12px;color:#c07070;white-space:nowrap">4.51M</div><div class="a" style="left:220.5px;top:182.9px;font-size:9.3px;line-height:12px;color:#c07070;white-space:nowrap">7757</div><div class="a" style="left:83.5px;top:192.4px;font-size:9.45px;line-height:12px;color:#92922f;white-space:nowrap">(su)</div><div class="a" style="left:185.3px;top:192.4px;font-size:9.3px;line-height:12px;color:#92922f;white-space:nowrap">0.92M</div><div class="a" style="left:220.5px;top:192.4px;font-size:9.3px;line-height:12px;color:#92922f;white-space:nowrap">7718</div><div class="a" style="left:83.5px;top:201.8px;font-size:9.45px;line-height:12px;color:#4f9f8f;white-space:nowrap">(gmemusage)</div><div class="a" style="left:185.3px;top:201.8px;font-size:9.3px;line-height:12px;color:#4f9f8f;white-space:nowrap">4.03M</div><div class="a" style="left:220.5px;top:201.8px;font-size:9.3px;line-height:12px;color:#4f9f8f;white-space:nowrap">7671</div><div class="a" style="left:83.5px;top:211.2px;font-size:9.45px;line-height:12px;color:#7272c9;white-space:nowrap">(netscape)</div><div class="a" style="left:83.5px;top:220.6px;font-size:9.45px;line-height:12px;color:#c07070;white-space:nowrap">(mxterm)</div><div class="a" style="left:83.5px;top:230.0px;font-size:9.45px;line-height:12px;color:#92922f;white-space:nowrap">(xosview)</div><div class="a" style="left:83.5px;top:239.5px;font-size:9.45px;line-height:12px;color:#4f9f8f;white-space:nowrap">(xclock)</div><div class="a" style="left:83.5px;top:248.9px;font-size:9.45px;line-height:12px;color:#7272c9;white-space:nowrap">(ROX-Filer)</div><div class="a" style="left:83.5px;top:258.3px;font-size:9.45px;line-height:12px;color:#c07070;white-space:nowrap">(xconsole)</div><div class="a" style="left:83.5px;top:267.7px;font-size:9.45px;line-height:12px;color:#92922f;white-space:nowrap">(5Dwm)</div><div class="a" style="left:83.5px;top:277.1px;font-size:9.45px;line-height:12px;color:#4f9f8f;white-space:nowrap">(toolchest)</div><div class="a" style="left:83.5px;top:286.5px;font-size:9.45px;line-height:12px;color:#7272c9;white-space:nowrap">(Xsession.dt)</div><div class="a" style="left:83.5px;top:296.0px;font-size:9.45px;line-height:12px;color:#c07070;white-space:nowrap">(X)</div><div class="a" style="left:83.5px;top:305.4px;font-size:9.45px;line-height:12px;color:#92922f;white-space:nowrap">(startx)</div><div class="a" style="left:83.5px;top:314.8px;font-size:9.45px;line-height:12px;color:#4f9f8f;white-space:nowrap">(setiathome)</div><div class="a" style="left:83.5px;top:324.2px;font-size:9.45px;line-height:12px;color:#7272c9;white-space:nowrap">(smbmount)</div><div class="a" style="left:83.5px;top:333.6px;font-size:9.45px;line-height:12px;color:#c07070;white-space:nowrap">(bash)</div><div class="a" style="left:83.5px;top:343.1px;font-size:9.45px;line-height:12px;color:#92922f;white-space:nowrap">(mingetty)</div><div class="a" style="left:83.5px;top:352.5px;font-size:9.45px;line-height:12px;color:#4f9f8f;white-space:nowrap">(login)</div><div class="a" style="left:83.5px;top:361.9px;font-size:9.45px;line-height:12px;color:#7272c9;white-space:nowrap">(xfs)</div><div class="a" style="left:83.5px;top:371.3px;font-size:9.45px;line-height:12px;color:#c07070;white-space:nowrap">(lpd)</div><div class="a" style="left:83.5px;top:380.7px;font-size:9.45px;line-height:12px;color:#92922f;white-space:nowrap">(xinetd)</div><div class="a" style="left:83.5px;top:390.2px;font-size:9.45px;line-height:12px;color:#4f9f8f;white-space:nowrap">(sshd)</div><div class="a" style="left:83.5px;top:399.6px;font-size:9.45px;line-height:12px;color:#7272c9;white-space:nowrap">(dhclient)</div><div class="a" style="left:84.80000000000001px;top:409.0px;font-size:9.45px;line-height:12px;color:#a030a8;white-space:nowrap">Linux</div><svg class="a" style="left:0;top:0" width="260" height="470" viewBox="171 129 260 470"><line x1="230.5" y1="453.0" x2="253.5" y2="253.0" stroke="#7272c9" stroke-width="0.95"/><line x1="230.5" y1="455.9" x2="253.5" y2="262.4" stroke="#4f9f8f" stroke-width="0.95"/><line x1="230.5" y1="458.7" x2="253.5" y2="271.8" stroke="#7272c9" stroke-width="0.95"/><line x1="230.5" y1="461.6" x2="253.5" y2="281.3" stroke="#c07070" stroke-width="0.95"/><line x1="230.5" y1="464.5" x2="253.5" y2="290.7" stroke="#92922f" stroke-width="0.95"/><line x1="230.5" y1="467.3" x2="253.5" y2="300.1" stroke="#4f9f8f" stroke-width="0.95"/><line x1="230.5" y1="470.2" x2="253.5" y2="309.5" stroke="#7272c9" stroke-width="0.95"/><line x1="230.5" y1="473.1" x2="253.5" y2="318.9" stroke="#c07070" stroke-width="0.95"/><line x1="230.5" y1="475.9" x2="253.5" y2="328.4" stroke="#92922f" stroke-width="0.95"/><line x1="230.5" y1="478.8" x2="253.5" y2="337.8" stroke="#4f9f8f" stroke-width="0.95"/><line x1="230.5" y1="481.7" x2="253.5" y2="347.2" stroke="#7272c9" stroke-width="0.95"/><line x1="230.5" y1="484.5" x2="253.5" y2="356.6" stroke="#c07070" stroke-width="0.95"/><line x1="230.5" y1="487.4" x2="253.5" y2="366.0" stroke="#92922f" stroke-width="0.95"/><line x1="230.5" y1="490.3" x2="253.5" y2="375.5" stroke="#4f9f8f" stroke-width="0.95"/><line x1="230.5" y1="493.1" x2="253.5" y2="384.9" stroke="#7272c9" stroke-width="0.95"/><line x1="230.5" y1="496.0" x2="253.5" y2="394.3" stroke="#c07070" stroke-width="0.95"/><line x1="230.5" y1="498.9" x2="253.5" y2="403.7" stroke="#92922f" stroke-width="0.95"/><line x1="230.5" y1="501.7" x2="253.5" y2="413.1" stroke="#4f9f8f" stroke-width="0.95"/><line x1="230.5" y1="504.6" x2="253.5" y2="422.5" stroke="#7272c9" stroke-width="0.95"/><line x1="230.5" y1="507.5" x2="253.5" y2="432.0" stroke="#c07070" stroke-width="0.95"/><line x1="230.5" y1="510.3" x2="253.5" y2="441.4" stroke="#92922f" stroke-width="0.95"/><line x1="230.5" y1="513.2" x2="253.5" y2="450.8" stroke="#4f9f8f" stroke-width="0.95"/><line x1="230.5" y1="516.1" x2="253.5" y2="460.2" stroke="#7272c9" stroke-width="0.95"/><line x1="230.5" y1="518.9" x2="253.5" y2="469.6" stroke="#c07070" stroke-width="0.95"/><line x1="230.5" y1="521.8" x2="253.5" y2="479.1" stroke="#92922f" stroke-width="0.95"/><line x1="230.5" y1="524.7" x2="253.5" y2="488.5" stroke="#4f9f8f" stroke-width="0.95"/><line x1="230.5" y1="527.5" x2="253.5" y2="497.9" stroke="#7272c9" stroke-width="0.95"/><line x1="230.5" y1="530.4" x2="253.5" y2="507.3" stroke="#c07070" stroke-width="0.95"/><line x1="230.5" y1="533.3" x2="253.5" y2="516.7" stroke="#92922f" stroke-width="0.95"/><line x1="230.5" y1="536.1" x2="253.5" y2="526.2" stroke="#4f9f8f" stroke-width="0.95"/><line x1="230.5" y1="539.0" x2="253.5" y2="535.6" stroke="#7272c9" stroke-width="0.95"/><line x1="231" y1="544" x2="251" y2="544" stroke="#a030a8" stroke-width="0.95"/></svg></div></div></div>
<div class="win" style="left:372px;top:8px;width:541px;height:293px"><div class="nt" style="left:24px;top:1px;width:1px;height:4px"></div><div class="nd" style="left:23px;top:1px;width:1px;height:4px"></div><div class="nt" style="left:514px;top:1px;width:1px;height:4px"></div><div class="nd" style="left:513px;top:1px;width:1px;height:4px"></div><div class="nt" style="left:24px;top:286px;width:1px;height:4px"></div><div class="nd" style="left:23px;top:286px;width:1px;height:4px"></div><div class="nt" style="left:514px;top:286px;width:1px;height:4px"></div><div class="nd" style="left:513px;top:286px;width:1px;height:4px"></div><div class="nt" style="left:1px;top:24px;width:4px;height:1px"></div><div class="nd" style="left:1px;top:23px;width:4px;height:1px"></div><div class="nt" style="left:1px;top:266px;width:4px;height:1px"></div><div class="nd" style="left:1px;top:265px;width:4px;height:1px"></div><div class="nt" style="left:534px;top:24px;width:4px;height:1px"></div><div class="nd" style="left:534px;top:23px;width:4px;height:1px"></div><div class="nt" style="left:534px;top:266px;width:4px;height:1px"></div><div class="nd" style="left:534px;top:265px;width:4px;height:1px"></div><div class="in"><div class="tb"><div class="bt" style="left:0;width:18px"><div class="a" style="left:3px;top:7px;width:12.4px;height:5.2px;border:1px solid #1a1a1a;border-bottom-width:1.4px;background:#b8b8b8;box-shadow:inset 1px 1px 0 #e8e8e8"></div></div><div class="bt" style="right:0;width:20px"><div class="a" style="left:4px;top:3px;width:12px;height:12px;border:1px solid #1a1a1a;border-bottom-width:1.4px;border-right-width:1.4px;border-radius:1.5px;background:#a6a6a6;box-shadow:inset 1px 1px 0 #d8d8d8"></div></div><div class="bt" style="right:20px;width:18px"><div class="a" style="left:7px;top:7px;width:4.4px;height:4.4px;border:1px solid #1a1a1a;background:#d0d0d0"></div></div><div class="ti" style="left:18px;right:38px;padding-left:10.5px">emasson@galaxy:~</div></div><div class="cl " style="top:18px"><div class="a" style="left:0;top:0;width:100%;height:100%;background:#0a0037"></div><div class="a" style="left:0;top:0;width:14px;height:100%;background:#9a9a9a;border-right:1px solid #333;box-shadow:inset 1px 0 0 #6a6a6a"></div><div class="a" style="left:1px;top:0.5px;width:12px;height:13px;background:#a8a8a8;border:1px solid;border-color:#e0e0e0 #555 #555 #e0e0e0"></div><svg class="a" style="left:1px;top:1px" width="12" height="12"><path d="M6 3 L9.6 9.2 L2.4 9.2 Z" fill="#5c645c"/></svg><div class="a" style="left:1px;top:228px;width:12px;height:21px;background:#b0b0b0;border:1px solid;border-color:#e8e8e8 #555 #555 #e8e8e8"></div><div class="a" style="left:2px;top:236px;width:10px;height:1px;background:#555"></div><div class="a" style="left:2px;top:237px;width:10px;height:1px;background:#e8e8e8"></div><div class="a" style="left:2px;top:238px;width:10px;height:1px;background:#555"></div><div class="a" style="left:2px;top:239px;width:10px;height:1px;background:#e8e8e8"></div><div class="a" style="left:2px;top:240px;width:10px;height:1px;background:#555"></div><div class="a" style="left:2px;top:241px;width:10px;height:1px;background:#e8e8e8"></div><div class="a" style="left:1px;top:250px;width:12px;height:13px;background:#a8a8a8;border:1px solid;border-color:#e0e0e0 #555 #555 #e0e0e0"></div><svg class="a" style="left:1px;top:250px" width="12" height="13"><path d="M6 10 L9.8 3.5 L2.2 3.5 Z" fill="#555"/></svg><div class="a mono" style="left:16px;top:1.8999999999999986px;font-size:10.05px;line-height:11.31px;color:#dcdce4"><div style="height:11.31px"><b style="color:#ff0;">NAME</b></div><div style="height:11.31px">       ls - list directory contents</div><div style="height:11.31px"></div><div style="height:11.31px"><b style="color:#ff0;">SYNOPSIS</b></div><div style="height:11.31px">       <b style="color:#ff0;">ls</b> [<span style="color:#ff0;text-decoration:underline">OPTION</span>]... [<span style="color:#ff0;text-decoration:underline">FILE</span>]...</div><div style="height:11.31px"></div><div style="height:11.31px"><b style="color:#ff0;">DESCRIPTION</b></div><div style="height:11.31px">       List  information  about  the FILEs (the current directory by default).</div><div style="height:11.31px">       Sort entries alphabetically if none of -cftuSUX nor --sort.</div><div style="height:11.31px"></div><div style="height:11.31px">       Mandatory arguments to long options are mandatory for short options</div><div style="height:11.31px">       too.</div><div style="height:11.31px"></div><div style="height:11.31px">       <b style="color:#ff0;">-a, --all</b></div><div style="height:11.31px">              do not hide entries starting with .</div><div style="height:11.31px"></div><div style="height:11.31px">       <b style="color:#ff0;">-A, --almost-all</b></div><div style="height:11.31px">              do not list implied . and ..</div><div style="height:11.31px"></div><div style="height:11.31px">       <b style="color:#ff0;">--author</b></div><div style="height:11.31px">              print the author of each file</div><div style="height:11.31px"></div><div style="height:11.31px">:</div></div><div class="a" style="left:22.5px;top:251px;width:6px;height:11px;border:1px solid #20d020"></div></div></div></div>
<div class="win" style="left:336px;top:338px;width:579px;height:348px"><div class="nt" style="left:24px;top:1px;width:1px;height:4px"></div><div class="nd" style="left:23px;top:1px;width:1px;height:4px"></div><div class="nt" style="left:552px;top:1px;width:1px;height:4px"></div><div class="nd" style="left:551px;top:1px;width:1px;height:4px"></div><div class="nt" style="left:24px;top:341px;width:1px;height:4px"></div><div class="nd" style="left:23px;top:341px;width:1px;height:4px"></div><div class="nt" style="left:552px;top:341px;width:1px;height:4px"></div><div class="nd" style="left:551px;top:341px;width:1px;height:4px"></div><div class="nt" style="left:1px;top:24px;width:4px;height:1px"></div><div class="nd" style="left:1px;top:23px;width:4px;height:1px"></div><div class="nt" style="left:1px;top:321px;width:4px;height:1px"></div><div class="nd" style="left:1px;top:320px;width:4px;height:1px"></div><div class="nt" style="left:572px;top:24px;width:4px;height:1px"></div><div class="nd" style="left:572px;top:23px;width:4px;height:1px"></div><div class="nt" style="left:572px;top:321px;width:4px;height:1px"></div><div class="nd" style="left:572px;top:320px;width:4px;height:1px"></div><div class="in"><div class="tb"><div class="bt" style="left:0;width:18px"><div class="a" style="left:3px;top:7px;width:12.4px;height:5.2px;border:1px solid #1a1a1a;border-bottom-width:1.4px;background:#b8b8b8;box-shadow:inset 1px 1px 0 #e8e8e8"></div></div><div class="bt" style="right:0;width:20px"><div class="a" style="left:4px;top:3px;width:12px;height:12px;border:1px solid #1a1a1a;border-bottom-width:1.4px;border-right-width:1.4px;border-radius:1.5px;background:#a6a6a6;box-shadow:inset 1px 1px 0 #d8d8d8"></div></div><div class="bt" style="right:20px;width:18px"><div class="a" style="left:7px;top:7px;width:4.4px;height:4.4px;border:1px solid #1a1a1a;background:#d0d0d0"></div></div><div class="ti" style="left:18px;right:38px;padding-left:10px">WmInitWs.c - /opt/IMD/src/5Dwm-1.0/src/WmInitWs.c</div></div><div class="cl " style="top:18px"><div class="a" style="left:0;top:0;width:100%;height:100%;background:#747474"></div><div class="a" style="left:0;top:0;width:100%;height:20px;background:#b8c2b9;box-shadow:inset 1px 1px 0 #eef2ee,inset -1px -1px 0 #707870;border-bottom:1px solid #333"></div><div class="a" style="left:11.5px;top:3.9px;font:italic bold 11.4px 'Liberation Sans',sans-serif;line-height:14px;letter-spacing:-0.3px;white-space:nowrap"><span class="u">F</span>ile</div><div class="a" style="left:47.5px;top:3.9px;font:italic bold 11.4px 'Liberation Sans',sans-serif;line-height:14px;letter-spacing:-0.3px;white-space:nowrap"><span class="u">E</span>dit</div><div class="a" style="left:86.69999999999999px;top:3.9px;font:italic bold 11.4px 'Liberation Sans',sans-serif;line-height:14px;letter-spacing:-0.3px;white-space:nowrap"><span class="u">S</span>earch</div><div class="a" style="left:141.5px;top:3.9px;font:italic bold 11.4px 'Liberation Sans',sans-serif;line-height:14px;letter-spacing:-0.3px;white-space:nowrap"><span class="u">P</span>references</div><div class="a" style="left:535px;top:3.9px;font:italic bold 11.4px 'Liberation Sans',sans-serif;line-height:14px;letter-spacing:-0.3px;white-space:nowrap"><span class="u">H</span>elp</div><div class="a" style="left:1px;top:21px;width:550px;height:280px;background:#a9a9a9;border:1px solid;border-color:#444 #ddd #ddd #444"></div><div class="a mono" style="left:6.300000000000011px;top:28.100000000000023px;font-size:11.3px;line-height:11.31px;color:#000"><div style="height:11.31px">    }</div><div style="height:11.31px">    <b>else</b> {</div><div style="height:11.31px"></div><div style="height:11.31px">    sAttributes.event_mask = SubstructureRedirectMask;</div><div style="height:11.31px"></div><div style="height:11.31px"></div><div style="height:11.31px">    <b>for</b> (scr=<span style="color:#0a7a2a">0</span>; scr&lt;wmGD.numScreens; scr++) {</div><div style="height:11.31px">            <b style="color:#c01030">int</b> sNum;</div><div style="height:11.31px"></div><div style="height:11.31px">            <i style="color:#333">/*</i></div><div style="height:11.31px">            <i style="color:#333"> * Gain control of the root windows of each screen</i></div><div style="height:11.31px">            <i style="color:#333"> */</i></div><div style="height:11.31px"></div><div style="height:11.31px">            sNum = (wmGD.numScreens==1) ? DefaultScreen(DISPLAY) :   scr;</div><div style="height:11.31px">            wmGD.errorFlag = False;</div><div style="height:11.31px"></div><div style="height:11.31px">            XChangeWindowAttributes (DISPLAY, RootWindow (DISPLAY, sNum),</div><div style="height:11.31px">            CWEventMask, &amp;sAttributes);</div><div style="height:11.31px">            <i style="color:#333">/*</i></div><div style="height:11.31px">            <i style="color:#333"> * Do XSync to force server action and catch errors</i></div><div style="height:11.31px">            <i style="color:#333"> * immediately.</i></div><div style="height:11.31px">            <i style="color:#333"> */</i></div><div style="height:11.31px">            XSync (DISPLAY, False);</div></div><div class="sb" style="left:551px;top:21px;width:16px;height:281px"></div><div class="sbb" style="left:552px;top:22px;width:14px;height:14px"></div><svg class="a" style="left:552px;top:22px" width="14" height="14"><path d="M7 3.5 L11 10.5 L3 10.5 Z" fill="#6a6a6a"/></svg><div class="sbb" style="left:552px;top:102px;width:14px;height:22px"></div><div class="a" style="left:553px;top:110px;width:12px;height:1px;background:#555"></div><div class="a" style="left:553px;top:111px;width:12px;height:1px;background:#e0e0e0"></div><div class="a" style="left:553px;top:113px;width:12px;height:1px;background:#555"></div><div class="a" style="left:553px;top:114px;width:12px;height:1px;background:#e0e0e0"></div><div class="a" style="left:553px;top:116px;width:12px;height:1px;background:#555"></div><div class="a" style="left:553px;top:117px;width:12px;height:1px;background:#e0e0e0"></div><div class="sbb" style="left:552px;top:287px;width:14px;height:14px"></div><svg class="a" style="left:552px;top:287px" width="14" height="14"><path d="M7 10.5 L11 3.5 L3 3.5 Z" fill="#555"/></svg><div class="sb" style="left:1px;top:301px;width:550px;height:16px"></div><div class="sbb" style="left:2px;top:302px;width:14px;height:14px"></div><svg class="a" style="left:2px;top:302px" width="14" height="14"><path d="M3.5 7 L10.5 3 L10.5 11 Z" fill="#555"/></svg><div class="sbb" style="left:537px;top:302px;width:14px;height:14px"></div><svg class="a" style="left:537px;top:302px" width="14" height="14"><path d="M10.5 7 L3.5 3 L3.5 11 Z" fill="#555"/></svg><div class="a" style="left:551px;top:301px;width:16px;height:16px;background:#a9a9a9"></div></div></div></div>
<div class="win" style="left:579px;top:103px;width:314px;height:151px"><div class="nt" style="left:24px;top:1px;width:1px;height:4px"></div><div class="nd" style="left:23px;top:1px;width:1px;height:4px"></div><div class="nt" style="left:287px;top:1px;width:1px;height:4px"></div><div class="nd" style="left:286px;top:1px;width:1px;height:4px"></div><div class="nt" style="left:24px;top:144px;width:1px;height:4px"></div><div class="nd" style="left:23px;top:144px;width:1px;height:4px"></div><div class="nt" style="left:287px;top:144px;width:1px;height:4px"></div><div class="nd" style="left:286px;top:144px;width:1px;height:4px"></div><div class="nt" style="left:1px;top:24px;width:4px;height:1px"></div><div class="nd" style="left:1px;top:23px;width:4px;height:1px"></div><div class="nt" style="left:1px;top:124px;width:4px;height:1px"></div><div class="nd" style="left:1px;top:123px;width:4px;height:1px"></div><div class="nt" style="left:307px;top:24px;width:4px;height:1px"></div><div class="nd" style="left:307px;top:23px;width:4px;height:1px"></div><div class="nt" style="left:307px;top:124px;width:4px;height:1px"></div><div class="nd" style="left:307px;top:123px;width:4px;height:1px"></div><div class="in"><div class="tb"><div class="ti" style="left:0px;right:0px;padding-left:9px;background:#828282;line-height:16.4px"><span style="letter-spacing:0.18px">Find (in WmInitWs.c)</span></div></div><div class="cl dlg" style="top:18px"><div class="bl" style="left:6.5px;top:5px;line-height:14px"><span class="u">S</span>tring to Find:</div><div class="bl" style="left:105.5px;top:5px;line-height:14px">(use up arrow key to recall previous)</div><div class="tf" style="left:6px;top:22px;width:289px;height:21px;font-size:10.05px;line-height:20.4px;padding-left:5.5px">Microsoft ?</div><div class="a" style="left:79.5px;top:26px;width:1px;height:12px;background:#3a3a3a"></div><div class="cb" style="left:8px;top:51.400000000000006px"></div><div class="nl" style="left:22px;top:49.900000000000006px;line-height:14px"><span class="u">R</span>egular Expression</div><div class="a" style="left:120.79999999999995px;top:46.19999999999999px;width:94.5px;height:20.4px;border:1.5px solid #111"></div><div class="cb" style="left:126px;top:51.400000000000006px;background:#ccd4cc"></div><svg class="a" style="left:126px;top:49.400000000000006px" width="14" height="14" viewBox="0 0 14 14"><path d="M1 5.6 L2.6 4.4 L4.8 6.6 L10.8 1.2 L11.6 2 L5 9.6 Z" fill="#e00028" stroke="#e00028" stroke-width="0.7" stroke-linejoin="round"/></svg><div class="nl" style="left:139.5px;top:49.900000000000006px;line-height:14px"><span class="u">C</span>ase Sensitive</div><div class="cb" style="left:221px;top:51.400000000000006px"></div><div class="nl" style="left:236.5px;top:49.900000000000006px;line-height:14px">Wh<span class="u">o</span>le Word</div><div class="cb" style="left:8px;top:72.30000000000001px"></div><div class="nl" style="left:22px;top:70.80000000000001px;line-height:14px">Search <span class="u">B</span>ackward</div><div class="cb" style="left:223px;top:72.30000000000001px;background:#ccd4cc"></div><svg class="a" style="left:223px;top:70.30000000000001px" width="14" height="14" viewBox="0 0 14 14"><path d="M1 5.6 L2.6 4.4 L4.8 6.6 L10.8 1.2 L11.6 2 L5 9.6 Z" fill="#e00028" stroke="#e00028" stroke-width="0.7" stroke-linejoin="round"/></svg><div class="nl" style="left:237.5px;top:70.80000000000001px;line-height:14px"><span class="u">K</span>eep Dialog</div><div class="ring" style="left:64px;top:91px;width:41px;height:27.5px"></div><div class="btn" style="left:67.5px;top:94.5px;width:34.5px;height:20.5px;line-height:18.5px">Find</div><div class="btn" style="left:191px;top:94.5px;width:47.5px;height:20.5px;line-height:18.5px">Cancel</div></div></div></div>
<div class="win" style="left:527px;top:268px;width:279px;height:388px"><div class="nt" style="left:24px;top:1px;width:1px;height:4px"></div><div class="nd" style="left:23px;top:1px;width:1px;height:4px"></div><div class="nt" style="left:252px;top:1px;width:1px;height:4px"></div><div class="nd" style="left:251px;top:1px;width:1px;height:4px"></div><div class="nt" style="left:24px;top:381px;width:1px;height:4px"></div><div class="nd" style="left:23px;top:381px;width:1px;height:4px"></div><div class="nt" style="left:252px;top:381px;width:1px;height:4px"></div><div class="nd" style="left:251px;top:381px;width:1px;height:4px"></div><div class="nt" style="left:1px;top:24px;width:4px;height:1px"></div><div class="nd" style="left:1px;top:23px;width:4px;height:1px"></div><div class="nt" style="left:1px;top:361px;width:4px;height:1px"></div><div class="nd" style="left:1px;top:360px;width:4px;height:1px"></div><div class="nt" style="left:272px;top:24px;width:4px;height:1px"></div><div class="nd" style="left:272px;top:23px;width:4px;height:1px"></div><div class="nt" style="left:272px;top:361px;width:4px;height:1px"></div><div class="nd" style="left:272px;top:360px;width:4px;height:1px"></div><div class="in"><div class="tb"><div class="ti" style="left:0px;right:0px;padding-left:9px;background:#828282;line-height:16.4px">Save File As</div></div><div class="cl dlg" style="top:18px"><div class="bl" style="left:10.5px;top:9px;line-height:14px">Fi<span class="u">l</span>ter</div><div class="tf" style="left:10.5px;top:26px;width:245.5px;height:20.5px;font-size:10.05px;line-height:19px;padding-left:5.5px">/opt/IMD/src/5Dwm-1.0/src/*</div><div class="a" style="left:178px;top:29px;width:1px;height:13px;background:#3a3a3a"></div><div class="bl" style="left:10.5px;top:57.5px;line-height:14px"><span class="u">D</span>irectories</div><div class="bl" style="left:130.5px;top:57.5px;line-height:14px"><span class="u">F</span>iles</div><div class="a" style="left:9.5px;top:73.5px;width:110.5px;height:141.0px;border:1px solid;border-color:#3a3a3a #f0f4f0 #f0f4f0 #3a3a3a;box-shadow:inset 1px 1px 0 #707070;background:#b8c2b9"></div><div class="a" style="left:11.5px;top:75.5px;width:92.5px;height:123.0px;background:#999;box-shadow:1px 1px 0 #e0e4e0,inset 1px 1px 0 #555"></div><div class="a" style="left:17.100000000000023px;top:81.30000000000001px;width:81.9px;height:11.6px;background:#f0002c"></div><div class="nl" style="left:17.5px;top:80.0px;line-height:14px;font-size:11.1px;color:#1c1c1c">/src/.</div><div class="nl" style="left:17.5px;top:94.2px;line-height:14px;font-size:11.1px;color:#1c1c1c">/src/..</div><div class="nl" style="left:17.5px;top:108.5px;line-height:14px;font-size:11.1px;color:#1c1c1c">/src/WmWsmLib</div><div class="sb" style="left:105.5px;top:75.5px;width:13.5px;height:123.0px"></div><div class="sbb" style="left:106.5px;top:76.5px;width:11.5px;height:12px"></div><svg class="a" style="left:106.5px;top:76.5px" width="11.5" height="12"><path d="M5.75 3 L8.5 9 L3 9 Z" fill="#666"/></svg><div class="sbb" style="left:106.5px;top:185.5px;width:11.5px;height:12px"></div><svg class="a" style="left:106.5px;top:185.5px" width="11.5" height="12"><path d="M5.75 9 L8.5 3 L3 3 Z" fill="#555"/></svg><div class="sb" style="left:11.5px;top:199.5px;width:93.0px;height:13.5px"></div><div class="sbb" style="left:12.5px;top:200.5px;width:12px;height:11.5px"></div><svg class="a" style="left:12.5px;top:200.5px" width="12" height="11.5"><path d="M3 5.75 L9 3 L9 8.5 Z" fill="#555"/></svg><div class="sbb" style="left:91.5px;top:200.5px;width:12px;height:11.5px"></div><svg class="a" style="left:91.5px;top:200.5px" width="12" height="11.5"><path d="M9 5.75 L3 3 L3 8.5 Z" fill="#555"/></svg><div class="sbb" style="left:61.5px;top:200.5px;width:29.5px;height:11.5px"></div><div class="a" style="left:72.25px;top:201.5px;width:1px;height:9.5px;background:#555"></div><div class="a" style="left:73.25px;top:201.5px;width:1px;height:9.5px;background:#e4e4e4"></div><div class="a" style="left:75.25px;top:201.5px;width:1px;height:9.5px;background:#555"></div><div class="a" style="left:76.25px;top:201.5px;width:1px;height:9.5px;background:#e4e4e4"></div><div class="a" style="left:78.25px;top:201.5px;width:1px;height:9.5px;background:#555"></div><div class="a" style="left:79.25px;top:201.5px;width:1px;height:9.5px;background:#e4e4e4"></div><div class="sbb" style="left:105.5px;top:199.5px;width:13.5px;height:13.5px;background:#a4a8a4"></div><div class="a" style="left:130px;top:73.5px;width:126.5px;height:141.0px;border:1px solid;border-color:#3a3a3a #f0f4f0 #f0f4f0 #3a3a3a;box-shadow:inset 1px 1px 0 #707070;background:#b8c2b9"></div><div class="a" style="left:132px;top:75.5px;width:108.5px;height:123.0px;background:#999;box-shadow:1px 1px 0 #e0e4e0,inset 1px 1px 0 #555"></div><div class="nl" style="left:138.29999999999995px;top:80.0px;line-height:14px;font-size:10.6px;color:#1c1c1c">5Dwm</div><div class="nl" style="left:138.29999999999995px;top:94.3px;line-height:14px;font-size:10.6px;color:#1c1c1c">5Dwm-good</div><div class="nl" style="left:138.29999999999995px;top:108.6px;line-height:14px;font-size:10.6px;color:#1c1c1c">Makefile</div><div class="nl" style="left:138.29999999999995px;top:122.9px;line-height:14px;font-size:10.6px;color:#1c1c1c">Mwm.msg</div><div class="nl" style="left:138.29999999999995px;top:137.2px;line-height:14px;font-size:10.6px;color:#1c1c1c">WmBitmap.h</div><div class="nl" style="left:138.29999999999995px;top:151.5px;line-height:14px;font-size:10.6px;color:#1c1c1c">WmCDInfo.c</div><div class="nl" style="left:138.29999999999995px;top:165.8px;line-height:14px;font-size:10.6px;color:#1c1c1c">WmCDInfo.h</div><div class="nl" style="left:138.29999999999995px;top:180.1px;line-height:14px;font-size:10.6px;color:#1c1c1c">WmCDInfo.o</div><div class="sb" style="left:242.0px;top:75.5px;width:13.5px;height:123.0px"></div><div class="sbb" style="left:243.0px;top:76.5px;width:11.5px;height:12px"></div><svg class="a" style="left:243.0px;top:76.5px" width="11.5" height="12"><path d="M5.75 3 L8.5 9 L3 9 Z" fill="#666"/></svg><div class="sbb" style="left:243.0px;top:185.5px;width:11.5px;height:12px"></div><svg class="a" style="left:243.0px;top:185.5px" width="11.5" height="12"><path d="M5.75 9 L8.5 3 L3 3 Z" fill="#555"/></svg><div class="sbb" style="left:243.0px;top:89px;width:11.5px;height:21.5px"></div><div class="a" style="left:244.0px;top:95.75px;width:9.5px;height:1px;background:#555"></div><div class="a" style="left:244.0px;top:96.75px;width:9.5px;height:1px;background:#e4e4e4"></div><div class="a" style="left:244.0px;top:98.75px;width:9.5px;height:1px;background:#555"></div><div class="a" style="left:244.0px;top:99.75px;width:9.5px;height:1px;background:#e4e4e4"></div><div class="a" style="left:244.0px;top:101.75px;width:9.5px;height:1px;background:#555"></div><div class="a" style="left:244.0px;top:102.75px;width:9.5px;height:1px;background:#e4e4e4"></div><div class="sb" style="left:132px;top:199.5px;width:109.0px;height:13.5px"></div><div class="sbb" style="left:133px;top:200.5px;width:12px;height:11.5px"></div><svg class="a" style="left:133px;top:200.5px" width="12" height="11.5"><path d="M3 5.75 L9 3 L9 8.5 Z" fill="#555"/></svg><div class="sbb" style="left:228.0px;top:200.5px;width:12px;height:11.5px"></div><svg class="a" style="left:228.0px;top:200.5px" width="12" height="11.5"><path d="M9 5.75 L3 3 L3 8.5 Z" fill="#555"/></svg><div class="sbb" style="left:191px;top:200.5px;width:37px;height:11.5px"></div><div class="a" style="left:205.5px;top:201.5px;width:1px;height:9.5px;background:#555"></div><div class="a" style="left:206.5px;top:201.5px;width:1px;height:9.5px;background:#e4e4e4"></div><div class="a" style="left:208.5px;top:201.5px;width:1px;height:9.5px;background:#555"></div><div class="a" style="left:209.5px;top:201.5px;width:1px;height:9.5px;background:#e4e4e4"></div><div class="a" style="left:211.5px;top:201.5px;width:1px;height:9.5px;background:#555"></div><div class="a" style="left:212.5px;top:201.5px;width:1px;height:9.5px;background:#e4e4e4"></div><div class="sbb" style="left:242.0px;top:199.5px;width:13.5px;height:13.5px;background:#a4a8a4"></div><div class="bl" style="left:12px;top:228.79999999999995px;line-height:14px">Format:</div><svg class="a" style="left:58.5px;top:228.79999999999995px" width="14" height="14" viewBox="0 0 14 14"><path d="M7 0.8 L13.2 7 L7 13.2 L0.8 7 Z" fill="#a6aaa6"/><path d="M0.8 7 L7 0.8 L13.2 7" fill="none" stroke="#f6f8f6" stroke-width="1.1"/><path d="M13.2 7 L7 13.2 L0.8 7" fill="none" stroke="#303030" stroke-width="1.2"/></svg><div class="nl" style="left:74.5px;top:228.79999999999995px;line-height:14px"><span class="u">U</span>nix</div><svg class="a" style="left:103px;top:228.79999999999995px" width="14" height="14" viewBox="0 0 14 14"><path d="M7 0.8 L13.2 7 L7 13.2 L0.8 7 Z" fill="#ccd4cc"/><path d="M0.8 7 L7 0.8 L13.2 7" fill="none" stroke="#f6f8f6" stroke-width="1.1"/><path d="M13.2 7 L7 13.2 L0.8 7" fill="none" stroke="#303030" stroke-width="1.2"/><path d="M5.2 3.6 L9.6 7 L5.2 10.4 Z" fill="#2a2ae0"/></svg><div class="nl" style="left:119px;top:228.79999999999995px;line-height:14px">D<span class="u">O</span>S</div><svg class="a" style="left:149px;top:228.79999999999995px" width="14" height="14" viewBox="0 0 14 14"><path d="M7 0.8 L13.2 7 L7 13.2 L0.8 7 Z" fill="#a6aaa6"/><path d="M0.8 7 L7 0.8 L13.2 7" fill="none" stroke="#f6f8f6" stroke-width="1.1"/><path d="M13.2 7 L7 13.2 L0.8 7" fill="none" stroke="#303030" stroke-width="1.2"/></svg><div class="nl" style="left:165px;top:228.79999999999995px;line-height:14px"><span class="u">M</span>acintosh</div><div class="bl" style="left:10.5px;top:257px;line-height:14px">New File Name:</div><div class="tf" style="left:10.5px;top:274.5px;width:245.5px;height:20.5px;font-size:10.05px;line-height:19px;padding-left:5.5px">/opt/IMD/src/5Dwm-1.0/src/</div><div class="a" style="left:172px;top:278px;width:1px;height:13px;background:#3a3a3a"></div><div class="a" style="left:0;top:305px;width:100%;height:1px;background:#707870"></div><div class="a" style="left:0;top:306px;width:100%;height:1px;background:#dfe7df"></div><div class="ring" style="left:11px;top:317px;width:57px;height:30.5px"></div><div class="btn" style="left:14.5px;top:321px;width:50.5px;height:23px;line-height:21px">OK</div><div class="btn" style="left:77px;top:321px;width:50.5px;height:23px;line-height:21px">Filter</div><div class="btn" style="left:139.5px;top:321px;width:50.5px;height:23px;line-height:21px">Cancel</div><div class="btn" style="left:202px;top:321px;width:50.5px;height:23px;line-height:21px">Help</div></div></div></div>
<div class="win" style="left:7px;top:613px;width:277px;height:170px"><div class="nt" style="left:24px;top:1px;width:1px;height:4px"></div><div class="nd" style="left:23px;top:1px;width:1px;height:4px"></div><div class="nt" style="left:250px;top:1px;width:1px;height:4px"></div><div class="nd" style="left:249px;top:1px;width:1px;height:4px"></div><div class="nt" style="left:24px;top:163px;width:1px;height:4px"></div><div class="nd" style="left:23px;top:163px;width:1px;height:4px"></div><div class="nt" style="left:250px;top:163px;width:1px;height:4px"></div><div class="nd" style="left:249px;top:163px;width:1px;height:4px"></div><div class="nt" style="left:1px;top:24px;width:4px;height:1px"></div><div class="nd" style="left:1px;top:23px;width:4px;height:1px"></div><div class="nt" style="left:1px;top:143px;width:4px;height:1px"></div><div class="nd" style="left:1px;top:142px;width:4px;height:1px"></div><div class="nt" style="left:270px;top:24px;width:4px;height:1px"></div><div class="nd" style="left:270px;top:23px;width:4px;height:1px"></div><div class="nt" style="left:270px;top:143px;width:4px;height:1px"></div><div class="nd" style="left:270px;top:142px;width:4px;height:1px"></div><div class="in"><div class="tb"><div class="bt" style="left:0;width:18px"><div class="a" style="left:3px;top:7px;width:12.4px;height:5.2px;border:1px solid #1a1a1a;border-bottom-width:1.4px;background:#b8b8b8;box-shadow:inset 1px 1px 0 #e8e8e8"></div></div><div class="bt" style="right:0;width:20px"><div class="a" style="left:5px;top:2px;width:10px;height:14px;border:1px solid #1a1a1a;border-bottom-width:1.4px;border-right-width:1.4px;border-radius:1.5px;background:#a6a6a6;box-shadow:inset 1px 1px 0 #d8d8d8"></div></div><div class="bt" style="right:20px;width:18px"><div class="a" style="left:7px;top:7px;width:4.4px;height:4.4px;border:1px solid #1a1a1a;background:#d0d0d0"></div></div><div class="ti" style="left:18px;right:38px;padding-left:11px"><span style="letter-spacing:0.2px">gr_osview</span></div></div><div class="cl " style="top:18px"><div class="a" style="left:0;top:0;width:100%;height:100%;background:#989898"></div><div class="a" style="left:8px;top:8px;font:italic bold 11.25px 'Liberation Mono',monospace;white-space:pre;line-height:13px;letter-spacing:0px;color:#000">CPU0 <span style="color:#2a10e8">user</span>/<span style="color:#f8f810">nice</span>/<span style="color:#f00028">sys</span>/<span style="color:#20f010">idle</span></div><div class="a" style="left:223.5px;top:6px;width:34.5px;height:11.5px;background:#000"></div><div class="a" style="left:226px;top:5.7000000000000455px;font:italic bold 11.25px 'Liberation Mono',monospace;white-space:pre;line-height:13px;letter-spacing:0px;color:#f00028">95%</div><div class="a" style="left:5.300000000000001px;top:20.2px;width:257.7px;height:11.8px;background:#111;border-top:1px solid #444"></div><div class="a" style="left:6px;top:20.6px;width:3.0px;height:10px;background:#2a10e8"></div><div class="a" style="left:9px;top:20.6px;width:247.3px;height:10px;background:#f8f810"></div><div class="a" style="left:256.3px;top:20.6px;width:2.3px;height:10px;background:#f00028"></div><div class="a" style="left:258.6px;top:20.6px;width:3.4px;height:10px;background:#20f010"></div><div class="a" style="left:31.6px;top:30.6px;width:1px;height:1.5px;background:#989898"></div><div class="a" style="left:57.2px;top:30.6px;width:1px;height:1.5px;background:#989898"></div><div class="a" style="left:82.8px;top:30.6px;width:1px;height:1.5px;background:#989898"></div><div class="a" style="left:108.4px;top:30.6px;width:1px;height:1.5px;background:#989898"></div><div class="a" style="left:134.0px;top:30.6px;width:1px;height:1.5px;background:#989898"></div><div class="a" style="left:159.6px;top:30.6px;width:1px;height:1.5px;background:#989898"></div><div class="a" style="left:185.2px;top:30.6px;width:1px;height:1.5px;background:#989898"></div><div class="a" style="left:210.8px;top:30.6px;width:1px;height:1.5px;background:#989898"></div><div class="a" style="left:236.4px;top:30.6px;width:1px;height:1.5px;background:#989898"></div><div class="a" style="left:8px;top:38px;font:italic bold 11.25px 'Liberation Mono',monospace;white-space:pre;line-height:13px;letter-spacing:0px;color:#000">MEM: <span style="color:#2a10e8">used</span>/<span style="color:#f8f810">shar</span>/<span style="color:#f09018">buff</span>/<span style="color:#f00028">cache</span>/<span style="color:#50e8e8">activ</span>/</div><div class="a" style="left:223.5px;top:36px;width:34.5px;height:11.5px;background:#000"></div><div class="a" style="left:226px;top:35.700000000000045px;font:italic bold 11.25px 'Liberation Mono',monospace;white-space:pre;line-height:13px;letter-spacing:0px;color:#f00028">390M</div><div class="a" style="left:5.300000000000001px;top:50.2px;width:257.7px;height:11.8px;background:#111;border-top:1px solid #444"></div><div class="a" style="left:6px;top:50.6px;width:55.7px;height:10px;background:#2a10e8"></div><div class="a" style="left:61.7px;top:50.6px;width:12.6px;height:10px;background:#f09018"></div><div class="a" style="left:74.3px;top:50.6px;width:129.4px;height:10px;background:#f00028"></div><div class="a" style="left:203.7px;top:50.6px;width:57.3px;height:10px;background:#50e8e8"></div><div class="a" style="left:261px;top:50.6px;width:1.0px;height:10px;background:#20f010"></div><div class="a" style="left:31.6px;top:60.6px;width:1px;height:1.5px;background:#989898"></div><div class="a" style="left:57.2px;top:60.6px;width:1px;height:1.5px;background:#989898"></div><div class="a" style="left:82.8px;top:60.6px;width:1px;height:1.5px;background:#989898"></div><div class="a" style="left:108.4px;top:60.6px;width:1px;height:1.5px;background:#989898"></div><div class="a" style="left:134.0px;top:60.6px;width:1px;height:1.5px;background:#989898"></div><div class="a" style="left:159.6px;top:60.6px;width:1px;height:1.5px;background:#989898"></div><div class="a" style="left:185.2px;top:60.6px;width:1px;height:1.5px;background:#989898"></div><div class="a" style="left:210.8px;top:60.6px;width:1px;height:1.5px;background:#989898"></div><div class="a" style="left:236.4px;top:60.6px;width:1px;height:1.5px;background:#989898"></div><div class="a" style="left:8px;top:68px;font:italic bold 11.25px 'Liberation Mono',monospace;white-space:pre;line-height:13px;letter-spacing:0px;color:#000">NET: <span style="color:#2a10e8">in</span>/<span style="color:#f00028">out</span>/<span style="color:#20f010">idle</span></div><div class="a" style="left:223.5px;top:66px;width:34.5px;height:11.5px;background:#000"></div><div class="a" style="left:226px;top:65.70000000000005px;font:italic bold 11.25px 'Liberation Mono',monospace;white-space:pre;line-height:13px;letter-spacing:0px;color:#f00028">0</div><div class="a" style="left:5.300000000000001px;top:80.3px;width:257.7px;height:11.8px;background:#111;border-top:1px solid #444"></div><div class="a" style="left:6px;top:80.7px;width:256.0px;height:10px;background:#20f010"></div><div class="a" style="left:31.6px;top:90.7px;width:1px;height:1.5px;background:#989898"></div><div class="a" style="left:57.2px;top:90.7px;width:1px;height:1.5px;background:#989898"></div><div class="a" style="left:82.8px;top:90.7px;width:1px;height:1.5px;background:#989898"></div><div class="a" style="left:108.4px;top:90.7px;width:1px;height:1.5px;background:#989898"></div><div class="a" style="left:134.0px;top:90.7px;width:1px;height:1.5px;background:#989898"></div><div class="a" style="left:159.6px;top:90.7px;width:1px;height:1.5px;background:#989898"></div><div class="a" style="left:185.2px;top:90.7px;width:1px;height:1.5px;background:#989898"></div><div class="a" style="left:210.8px;top:90.7px;width:1px;height:1.5px;background:#989898"></div><div class="a" style="left:236.4px;top:90.7px;width:1px;height:1.5px;background:#989898"></div><div class="a" style="left:8px;top:98px;font:italic bold 11.25px 'Liberation Mono',monospace;white-space:pre;line-height:13px;letter-spacing:0px;color:#000">DISK <span style="color:#2a10e8">READ</span>/<span style="color:#f8f810">WRITE</span>/<span style="color:#20f010">IDLE</span></div><div class="a" style="left:223.5px;top:96px;width:34.5px;height:11.5px;background:#000"></div><div class="a" style="left:226px;top:95.70000000000005px;font:italic bold 11.25px 'Liberation Mono',monospace;white-space:pre;line-height:13px;letter-spacing:0px;color:#f00028">15K</div><div class="a" style="left:5.300000000000001px;top:110.4px;width:257.7px;height:11.8px;background:#111;border-top:1px solid #444"></div><div class="a" style="left:6px;top:110.8px;width:256.0px;height:10px;background:#20f010"></div><div class="a" style="left:31.6px;top:120.8px;width:1px;height:1.5px;background:#989898"></div><div class="a" style="left:57.2px;top:120.8px;width:1px;height:1.5px;background:#989898"></div><div class="a" style="left:82.8px;top:120.8px;width:1px;height:1.5px;background:#989898"></div><div class="a" style="left:108.4px;top:120.8px;width:1px;height:1.5px;background:#989898"></div><div class="a" style="left:134.0px;top:120.8px;width:1px;height:1.5px;background:#989898"></div><div class="a" style="left:159.6px;top:120.8px;width:1px;height:1.5px;background:#989898"></div><div class="a" style="left:185.2px;top:120.8px;width:1px;height:1.5px;background:#989898"></div><div class="a" style="left:210.8px;top:120.8px;width:1px;height:1.5px;background:#989898"></div><div class="a" style="left:236.4px;top:120.8px;width:1px;height:1.5px;background:#989898"></div></div></div></div>
</body></html>
